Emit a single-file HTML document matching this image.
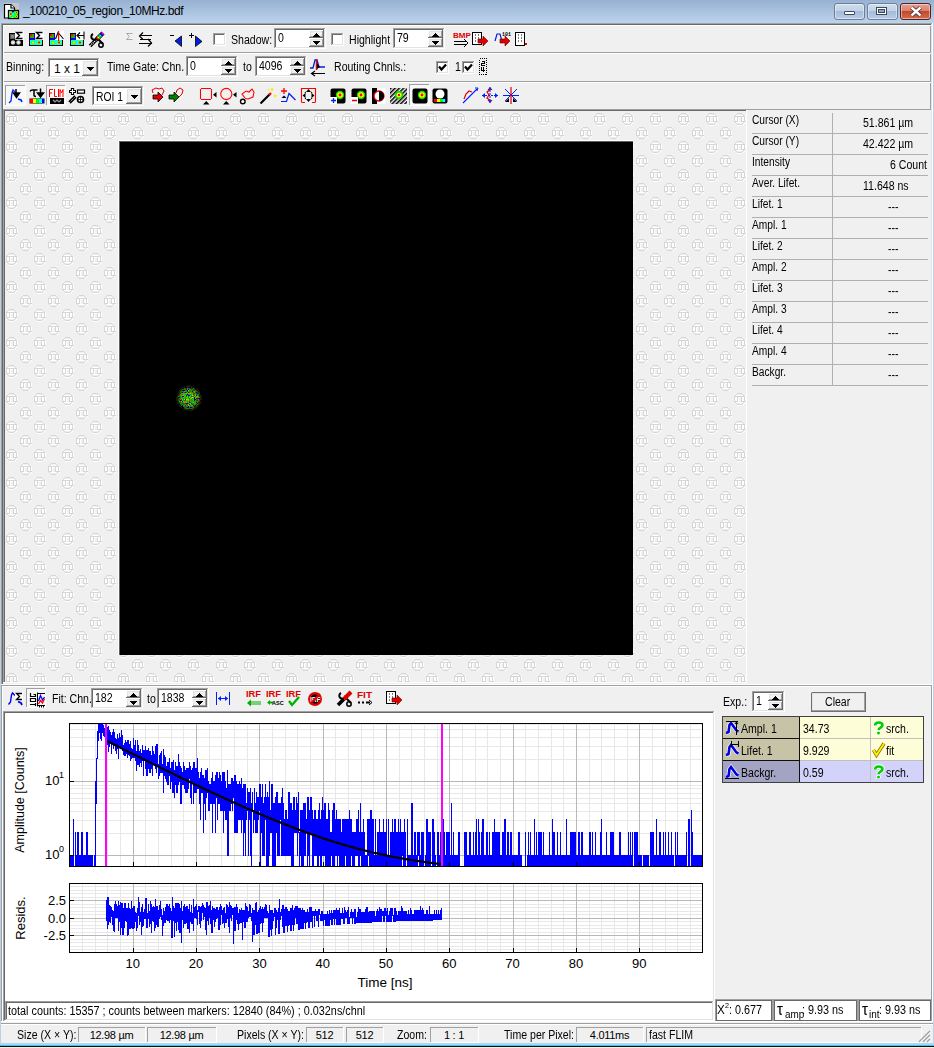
<!DOCTYPE html>
<html><head><meta charset="utf-8"><style>
html,body{margin:0;padding:0;}
body{width:934px;height:1048px;overflow:hidden;position:relative;background:#f0f0f0;font-family:"Liberation Sans",sans-serif;}
.t{position:absolute;white-space:pre;line-height:1;}
.r{position:absolute;}
svg.r{overflow:visible;}
</style></head><body>
<div class="r" style="left:0px;top:0px;width:934px;height:23px;background:linear-gradient(#97b1d2,#bcd3ec);"></div>
<div class="r" style="left:0px;top:23px;width:1px;height:1025px;background:#b9d1ea;"></div>
<div class="r" style="left:933px;top:23px;width:1px;height:1025px;background:#b9d1ea;"></div>
<div class="r" style="left:932px;top:23px;width:1px;height:1000px;background:#fff;"></div>
<div class="r" style="left:1px;top:23px;width:1px;height:662px;background:#a0a0a0;"></div>
<div class="r" style="left:2px;top:24px;width:1px;height:660px;background:#696969;"></div>
<div class="r" style="left:1px;top:23px;width:931px;height:1px;background:#a0a0a0;"></div>
<div class="r" style="left:2px;top:24px;width:929px;height:1px;background:#696969;"></div>
<div class="r" style="left:931px;top:24px;width:1px;height:660px;background:#e3e3e3;"></div>
<div class="r" style="left:1px;top:684px;width:932px;height:1px;background:#fff;"></div>
<div class="r" style="left:930px;top:25px;width:1px;height:84px;background:#a0a0a0;"></div>
<div class="r" style="left:1px;top:685px;width:931px;height:1px;background:#a0a0a0;"></div>
<div class="r" style="left:1px;top:685px;width:1px;height:337px;background:#a0a0a0;"></div>
<div class="r" style="left:2px;top:686px;width:929px;height:1px;background:#fff;"></div>
<div class="r" style="left:2px;top:686px;width:1px;height:335px;background:#fff;"></div>
<div class="r" style="left:931px;top:685px;width:1px;height:337px;background:#a0a0a0;"></div>
<div class="r" style="left:0px;top:1043px;width:934px;height:2px;background:#b9d1ea;"></div>
<div class="r" style="left:0px;top:1045px;width:934px;height:1px;background:#2ad0f0;"></div>
<div class="r" style="left:0px;top:1046px;width:934px;height:1px;background:#101010;"></div>
<div class="r" style="left:0px;top:1047px;width:934px;height:1px;background:#f0f0f0;"></div>
<svg class="r" style="left:2px;top:2px;" width="20" height="20" viewBox="0 0 20 20">
<rect x="1.5" y="1" width="15.5" height="15.5" fill="#c6c6c6"/>
<rect x="1" y="8" width="3" height="9" fill="#c6c6c6"/>
<path d="M2.5 2.5 H9 L12.5 6 V16 H2.5 Z" fill="#fff" stroke="#000" stroke-width="1.2"/>
<path d="M9 2.5 V6 H12.5" fill="#fff" stroke="#000" stroke-width="1.2"/>
<rect x="6.5" y="8.5" width="10" height="8" fill="#00ff00" stroke="#000" stroke-width="1.3"/>
<rect x="7.2" y="9.2" width="2" height="2" fill="#00ffff"/><rect x="10" y="9" width="2" height="1.5" fill="#0000d0"/>
<rect x="10.5" y="10.5" width="2" height="4" fill="#00ffff"/><rect x="7.2" y="13.5" width="1.5" height="2" fill="#00ffff"/>
<circle cx="8.8" cy="12" r="1.6" fill="#ffff00"/><circle cx="8.8" cy="12" r="1" fill="#ff0000"/>
<circle cx="14.5" cy="10.5" r="1.2" fill="#ffff00"/><circle cx="14.5" cy="10.5" r="0.7" fill="#ff0000"/>
<circle cx="14.5" cy="14.4" r="1.2" fill="#ffff00"/><circle cx="14.5" cy="14.4" r="0.7" fill="#ff0000"/>
<rect x="9.5" y="15" width="2" height="1" fill="#ffff00"/>
</svg>
<div class="t" style="left:23px;top:4.84px;font-size:12px;color:#000;letter-spacing:-0.42px;">_100210_05_region_10MHz.bdf</div>
<div class="r" style="left:834px;top:3px;width:29px;height:15px;border:1px solid #6d7f96;border-radius:3px;background:linear-gradient(#cfdcec 0%,#c0d2e8 45%,#a4bcd9 50%,#b8cde6 100%);box-shadow:inset 0 0 0 1px rgba(255,255,255,0.45)"></div>
<div class="r" style="left:867px;top:3px;width:29px;height:15px;border:1px solid #6d7f96;border-radius:3px;background:linear-gradient(#cfdcec 0%,#c0d2e8 45%,#a4bcd9 50%,#b8cde6 100%);box-shadow:inset 0 0 0 1px rgba(255,255,255,0.45)"></div>
<div class="r" style="left:900px;top:3px;width:29px;height:15px;border:1px solid #5a1d1d;border-radius:3px;background:linear-gradient(#e8a091 0%,#d9826d 45%,#c04a2a 50%,#cf6f4f 100%);box-shadow:inset 0 0 0 1px rgba(255,255,255,0.45)"></div>
<div class="r" style="left:844px;top:11px;width:11px;height:4px;background:#fff;border:1px solid #3c4a5c;border-radius:1px;box-sizing:border-box"></div>
<div class="r" style="left:876px;top:7px;width:11px;height:8px;border:1px solid #3c4a5c;background:#fff;box-sizing:border-box"></div>
<div class="r" style="left:878px;top:9px;width:7px;height:4px;background:#8aa6c8;border:1px solid #3c4a5c;box-sizing:border-box"></div>
<svg class="r" style="left:908px;top:6px;" width="16" height="11" viewBox="0 0 16 11"><path d="M3.5 1.5 L12.5 9.5 M12.5 1.5 L3.5 9.5" stroke="#4a2020" stroke-width="4"/><path d="M3.5 1.5 L12.5 9.5 M12.5 1.5 L3.5 9.5" stroke="#fff" stroke-width="2.4"/></svg>
<div class="r" style="left:3px;top:25px;width:928px;height:1px;background:#fff;"></div>
<div class="r" style="left:3px;top:25px;width:1px;height:1px;background:#fff;"></div>
<div class="r" style="left:3px;top:52px;width:928px;height:1px;background:#a0a0a0;"></div>
<div class="r" style="left:3px;top:53px;width:928px;height:1px;background:#fff;"></div>
<div class="r" style="left:3px;top:81px;width:928px;height:1px;background:#a0a0a0;"></div>
<div class="r" style="left:3px;top:82px;width:928px;height:1px;background:#fff;"></div>
<div class="r" style="left:3px;top:25px;width:1px;height:84px;background:#fff;"></div>
<svg class="r" style="left:8px;top:31px;" width="16" height="16" viewBox="0 0 16 16"><rect x="1" y="2" width="14" height="13" fill="#000"/><rect x="2" y="3" width="5" height="5" fill="#555"/><rect x="3" y="4" width="3" height="3" fill="#888"/><circle cx="5" cy="11.5" r="2.2" fill="#ccc"/><circle cx="5" cy="11.5" r="1" fill="#fff"/><circle cx="10.5" cy="11.5" r="2.2" fill="#ccc"/><circle cx="10.5" cy="11.5" r="1" fill="#fff"/><rect x="7" y="0" width="9" height="9" fill="#fff"/><path d="M14.5 1.5 H8.5 L11.5 4.5 L8.5 7.5 H14.5" stroke="#000" fill="none" stroke-width="1.4"/></svg>
<svg class="r" style="left:28px;top:31px;" width="16" height="16" viewBox="0 0 16 16"><rect x="1" y="2" width="14" height="13" fill="#000"/><rect x="2" y="3" width="12" height="11" fill="#0000ff"/><rect x="2" y="3" width="4" height="4" fill="#40a000"/><rect x="2" y="3" width="2" height="2" fill="#d02000"/><rect x="2" y="9" width="12" height="5" fill="#00ffff"/><circle cx="5" cy="11.5" r="2" fill="#40ff00"/><circle cx="5" cy="11.5" r="0.9" fill="#ffff00"/><circle cx="11" cy="11.5" r="2" fill="#80ff00"/><circle cx="11" cy="11.5" r="1.1" fill="#ff0000"/><rect x="7" y="0" width="9" height="9" fill="#fff"/><path d="M14.5 1.5 H8.5 L11.5 4.5 L8.5 7.5 H14.5" stroke="#000" fill="none" stroke-width="1.4"/></svg>
<svg class="r" style="left:48px;top:31px;" width="16" height="16" viewBox="0 0 16 16"><rect x="1" y="2" width="14" height="13" fill="#000"/><rect x="2" y="3" width="12" height="11" fill="#0000ff"/><rect x="2" y="3" width="4" height="4" fill="#40a000"/><rect x="2" y="3" width="2" height="2" fill="#d02000"/><rect x="2" y="9" width="12" height="5" fill="#00ffff"/><circle cx="5" cy="11.5" r="2" fill="#40ff00"/><circle cx="5" cy="11.5" r="0.9" fill="#ffff00"/><circle cx="11" cy="11.5" r="2" fill="#80ff00"/><circle cx="11" cy="11.5" r="1.1" fill="#ff0000"/><rect x="7" y="0" width="9" height="9" fill="#fff"/><path d="M7.5 8 L10 1.5 L15.5 8" stroke="#000" fill="none" stroke-width="1.1"/><rect x="10" y="0" width="1.2" height="10" fill="#ff0000"/></svg>
<svg class="r" style="left:69px;top:31px;" width="16" height="16" viewBox="0 0 16 16"><rect x="1" y="2" width="14" height="13" fill="#000"/><rect x="2" y="3" width="12" height="11" fill="#0000ff"/><rect x="2" y="3" width="4" height="4" fill="#40a000"/><rect x="2" y="3" width="2" height="2" fill="#d02000"/><rect x="2" y="9" width="12" height="5" fill="#00ffff"/><circle cx="5" cy="11.5" r="2" fill="#40ff00"/><circle cx="5" cy="11.5" r="0.9" fill="#ffff00"/><circle cx="11" cy="11.5" r="2" fill="#80ff00"/><circle cx="11" cy="11.5" r="1.1" fill="#ff0000"/><rect x="7" y="0" width="9" height="9" fill="#fff"/><path d="M15 4.5 H8 M11 1.5 L8 4.5 L11 7.5 M15 0.5 V8.5" stroke="#000" fill="none" stroke-width="1.1"/></svg>
<svg class="r" style="left:88px;top:31px;" width="17" height="17" viewBox="0 0 17 17">
<path d="M2 15 L8 9" stroke="#000" stroke-width="3.5"/><path d="M2 15 L8 9" stroke="#fff" stroke-width="1.5" stroke-dasharray="1 1"/>
<path d="M5 3 A3 3 0 1 0 9 7 L15 13" stroke="#000" stroke-width="2" fill="none"/>
<path d="M8 9 L15 2" stroke="#000" stroke-width="4.5"/>
<path d="M9 8 L10 7" stroke="#f00" stroke-width="3"/><path d="M10 7 L11 6" stroke="#ff0" stroke-width="3"/><path d="M11 6 L12 5" stroke="#0f0" stroke-width="3"/><path d="M12 5 L13 4" stroke="#0ff" stroke-width="3"/><path d="M13 4 L14 3" stroke="#00f" stroke-width="3"/><path d="M14 3 L15 2" stroke="#f0f" stroke-width="3"/>
<circle cx="13" cy="14" r="2.2" stroke="#000" stroke-width="1.5" fill="none"/>
</svg>
<svg class="r" style="left:125px;top:32px;" width="9" height="9" viewBox="0 0 9 9"><path d="M7.5 1.5 H1.5 L4.5 4.5 L1.5 7.5 H7.5" stroke="#a8a8a8" fill="none"/></svg>
<svg class="r" style="left:137px;top:31px;" width="17" height="16" viewBox="0 0 17 16"><path d="M3 4.5 H15 M3 8.5 H14 M2 12.5 H15" stroke="#000" stroke-width="1.2"/><path d="M6 1.5 L2.5 5 L6 8.5 M11 8 L14.5 12 L11 15.5" stroke="#000" fill="none" stroke-width="1.2"/></svg>
<svg class="r" style="left:170px;top:33px;" width="14" height="14" viewBox="0 0 14 14"><path d="M0 2.5 H4" stroke="#000"/><path d="M11.5 3 V13.5 L5 8 Z" fill="#0020e0" stroke="#000" stroke-width="0.8"/></svg>
<svg class="r" style="left:189px;top:32px;" width="14" height="15" viewBox="0 0 14 15"><path d="M0 3.5 H5 M2.5 1 V6" stroke="#000"/><path d="M6.5 4 V14.5 L13 9.5 Z" fill="#0020e0" stroke="#000" stroke-width="0.8"/></svg>
<div class="r" style="left:213px;top:33px;width:13px;height:13px;background:#fff;"></div>
<div class="r" style="left:213px;top:33px;width:12px;height:1px;background:#a0a0a0;"></div>
<div class="r" style="left:213px;top:33px;width:1px;height:12px;background:#a0a0a0;"></div>
<div class="r" style="left:214px;top:34px;width:10px;height:1px;background:#696969;"></div>
<div class="r" style="left:214px;top:34px;width:1px;height:10px;background:#696969;"></div>
<div class="r" style="left:213px;top:45px;width:13px;height:1px;background:#fff;"></div>
<div class="r" style="left:225px;top:33px;width:1px;height:13px;background:#fff;"></div>
<div class="r" style="left:214px;top:44px;width:11px;height:1px;background:#e3e3e3;"></div>
<div class="r" style="left:224px;top:34px;width:1px;height:11px;background:#e3e3e3;"></div>
<div class="t" style="left:231px;top:33.84px;font-size:12px;color:#000;transform:scaleX(0.88);transform-origin:0 0">Shadow:</div>
<div class="r" style="left:274px;top:28px;width:52px;height:21px;background:#fff;"></div>
<div class="r" style="left:274px;top:28px;width:51px;height:1px;background:#a0a0a0;"></div>
<div class="r" style="left:274px;top:28px;width:1px;height:20px;background:#a0a0a0;"></div>
<div class="r" style="left:274px;top:48px;width:52px;height:1px;background:#fff;"></div>
<div class="r" style="left:325px;top:28px;width:1px;height:21px;background:#fff;"></div>
<div class="r" style="left:275px;top:29px;width:49px;height:1px;background:#696969;"></div>
<div class="r" style="left:275px;top:29px;width:1px;height:18px;background:#696969;"></div>
<div class="r" style="left:275px;top:47px;width:50px;height:1px;background:#e3e3e3;"></div>
<div class="r" style="left:324px;top:29px;width:1px;height:19px;background:#e3e3e3;"></div>
<div class="r" style="left:309px;top:30px;width:15px;height:8px;background:#f0f0f0;"></div>
<div class="r" style="left:309px;top:30px;width:14px;height:1px;background:#fff;"></div>
<div class="r" style="left:309px;top:30px;width:1px;height:7px;background:#fff;"></div>
<div class="r" style="left:309px;top:37px;width:15px;height:1px;background:#696969;"></div>
<div class="r" style="left:323px;top:30px;width:1px;height:8px;background:#696969;"></div>
<div class="r" style="left:310px;top:31px;width:12px;height:1px;background:#e3e3e3;"></div>
<div class="r" style="left:310px;top:31px;width:1px;height:5px;background:#e3e3e3;"></div>
<div class="r" style="left:310px;top:36px;width:13px;height:1px;background:#a0a0a0;"></div>
<div class="r" style="left:322px;top:31px;width:1px;height:6px;background:#a0a0a0;"></div>
<div class="r" style="left:309px;top:38px;width:15px;height:9px;background:#f0f0f0;"></div>
<div class="r" style="left:309px;top:38px;width:14px;height:1px;background:#fff;"></div>
<div class="r" style="left:309px;top:38px;width:1px;height:8px;background:#fff;"></div>
<div class="r" style="left:309px;top:46px;width:15px;height:1px;background:#696969;"></div>
<div class="r" style="left:323px;top:38px;width:1px;height:9px;background:#696969;"></div>
<div class="r" style="left:310px;top:39px;width:12px;height:1px;background:#e3e3e3;"></div>
<div class="r" style="left:310px;top:39px;width:1px;height:6px;background:#e3e3e3;"></div>
<div class="r" style="left:310px;top:45px;width:13px;height:1px;background:#a0a0a0;"></div>
<div class="r" style="left:322px;top:39px;width:1px;height:7px;background:#a0a0a0;"></div>
<div class="r" style="left:316px;top:33px;width:1px;height:1px;background:#000;"></div>
<div class="r" style="left:315px;top:34px;width:3px;height:1px;background:#000;"></div>
<div class="r" style="left:314px;top:35px;width:5px;height:1px;background:#000;"></div>
<div class="r" style="left:313px;top:36px;width:7px;height:1px;background:#000;"></div>
<div class="r" style="left:313px;top:41px;width:7px;height:1px;background:#000;"></div>
<div class="r" style="left:314px;top:42px;width:5px;height:1px;background:#000;"></div>
<div class="r" style="left:315px;top:43px;width:3px;height:1px;background:#000;"></div>
<div class="r" style="left:316px;top:44px;width:1px;height:1px;background:#000;"></div>
<div class="t" style="left:278px;top:31.84px;font-size:12px;color:#000;transform:scaleX(0.88);transform-origin:0 0">0</div>
<div class="r" style="left:331px;top:33px;width:13px;height:13px;background:#fff;"></div>
<div class="r" style="left:331px;top:33px;width:12px;height:1px;background:#a0a0a0;"></div>
<div class="r" style="left:331px;top:33px;width:1px;height:12px;background:#a0a0a0;"></div>
<div class="r" style="left:332px;top:34px;width:10px;height:1px;background:#696969;"></div>
<div class="r" style="left:332px;top:34px;width:1px;height:10px;background:#696969;"></div>
<div class="r" style="left:331px;top:45px;width:13px;height:1px;background:#fff;"></div>
<div class="r" style="left:343px;top:33px;width:1px;height:13px;background:#fff;"></div>
<div class="r" style="left:332px;top:44px;width:11px;height:1px;background:#e3e3e3;"></div>
<div class="r" style="left:342px;top:34px;width:1px;height:11px;background:#e3e3e3;"></div>
<div class="t" style="left:349px;top:33.84px;font-size:12px;color:#000;transform:scaleX(0.88);transform-origin:0 0">Highlight</div>
<div class="r" style="left:393px;top:28px;width:52px;height:21px;background:#fff;"></div>
<div class="r" style="left:393px;top:28px;width:51px;height:1px;background:#a0a0a0;"></div>
<div class="r" style="left:393px;top:28px;width:1px;height:20px;background:#a0a0a0;"></div>
<div class="r" style="left:393px;top:48px;width:52px;height:1px;background:#fff;"></div>
<div class="r" style="left:444px;top:28px;width:1px;height:21px;background:#fff;"></div>
<div class="r" style="left:394px;top:29px;width:49px;height:1px;background:#696969;"></div>
<div class="r" style="left:394px;top:29px;width:1px;height:18px;background:#696969;"></div>
<div class="r" style="left:394px;top:47px;width:50px;height:1px;background:#e3e3e3;"></div>
<div class="r" style="left:443px;top:29px;width:1px;height:19px;background:#e3e3e3;"></div>
<div class="r" style="left:428px;top:30px;width:15px;height:8px;background:#f0f0f0;"></div>
<div class="r" style="left:428px;top:30px;width:14px;height:1px;background:#fff;"></div>
<div class="r" style="left:428px;top:30px;width:1px;height:7px;background:#fff;"></div>
<div class="r" style="left:428px;top:37px;width:15px;height:1px;background:#696969;"></div>
<div class="r" style="left:442px;top:30px;width:1px;height:8px;background:#696969;"></div>
<div class="r" style="left:429px;top:31px;width:12px;height:1px;background:#e3e3e3;"></div>
<div class="r" style="left:429px;top:31px;width:1px;height:5px;background:#e3e3e3;"></div>
<div class="r" style="left:429px;top:36px;width:13px;height:1px;background:#a0a0a0;"></div>
<div class="r" style="left:441px;top:31px;width:1px;height:6px;background:#a0a0a0;"></div>
<div class="r" style="left:428px;top:38px;width:15px;height:9px;background:#f0f0f0;"></div>
<div class="r" style="left:428px;top:38px;width:14px;height:1px;background:#fff;"></div>
<div class="r" style="left:428px;top:38px;width:1px;height:8px;background:#fff;"></div>
<div class="r" style="left:428px;top:46px;width:15px;height:1px;background:#696969;"></div>
<div class="r" style="left:442px;top:38px;width:1px;height:9px;background:#696969;"></div>
<div class="r" style="left:429px;top:39px;width:12px;height:1px;background:#e3e3e3;"></div>
<div class="r" style="left:429px;top:39px;width:1px;height:6px;background:#e3e3e3;"></div>
<div class="r" style="left:429px;top:45px;width:13px;height:1px;background:#a0a0a0;"></div>
<div class="r" style="left:441px;top:39px;width:1px;height:7px;background:#a0a0a0;"></div>
<div class="r" style="left:435px;top:33px;width:1px;height:1px;background:#000;"></div>
<div class="r" style="left:434px;top:34px;width:3px;height:1px;background:#000;"></div>
<div class="r" style="left:433px;top:35px;width:5px;height:1px;background:#000;"></div>
<div class="r" style="left:432px;top:36px;width:7px;height:1px;background:#000;"></div>
<div class="r" style="left:432px;top:41px;width:7px;height:1px;background:#000;"></div>
<div class="r" style="left:433px;top:42px;width:5px;height:1px;background:#000;"></div>
<div class="r" style="left:434px;top:43px;width:3px;height:1px;background:#000;"></div>
<div class="r" style="left:435px;top:44px;width:1px;height:1px;background:#000;"></div>
<div class="t" style="left:397px;top:31.84px;font-size:12px;color:#000;transform:scaleX(0.88);transform-origin:0 0">79</div>
<svg class="r" style="left:453px;top:31px;" width="17" height="16" viewBox="0 0 17 16"><text x="0" y="7" font-family="Liberation Sans" font-size="8" font-weight="bold" fill="#e00000">BMP</text><path d="M1 10.5 H14 M1 13.5 H14 M11 8 L15 12 L11 16" stroke="#000" fill="none"/></svg>
<svg class="r" style="left:472px;top:31px;" width="17" height="16" viewBox="0 0 17 16"><rect x="0.5" y="1.5" width="9" height="12" fill="#fff" stroke="#000"/><path d="M3 4 H4 M3 7 H4 M3 10 H4 M6 4 H7 M6 7 H7" stroke="#000"/><path d="M6 8 H11 V5 L16 10 L11 15 V12 H6 Z" fill="#e00000" stroke="#600" stroke-width="0.6"/></svg>
<svg class="r" style="left:494px;top:31px;" width="17" height="16" viewBox="0 0 17 16"><path d="M1 10 L3 3 H6 L8 10" stroke="#0020e0" fill="none" stroke-width="1.2"/><text x="8" y="5" font-family="Liberation Mono" font-size="5" font-weight="bold">101</text><path d="M6 8 H11 V5 L16 10 L11 15 V12 H6 Z" fill="#e00000" stroke="#600" stroke-width="0.6"/></svg>
<svg class="r" style="left:515px;top:31px;" width="15" height="16" viewBox="0 0 15 16"><rect x="0.5" y="1.5" width="9" height="13" fill="#fff" stroke="#000"/><path d="M3 4 H4 M6 4 H7 M3 7 H4 M6 7 H7 M3 10 H4 M6 10 H7" stroke="#000"/><rect x="10" y="12" width="2" height="2" fill="#e00000"/></svg>
<div class="t" style="left:6px;top:60.84px;font-size:12px;color:#000;transform:scaleX(0.88);transform-origin:0 0">Binning:</div>
<div class="r" style="left:48px;top:58px;width:52px;height:20px;background:#fff;"></div>
<div class="r" style="left:48px;top:58px;width:51px;height:1px;background:#a0a0a0;"></div>
<div class="r" style="left:48px;top:58px;width:1px;height:19px;background:#a0a0a0;"></div>
<div class="r" style="left:48px;top:77px;width:52px;height:1px;background:#fff;"></div>
<div class="r" style="left:99px;top:58px;width:1px;height:20px;background:#fff;"></div>
<div class="r" style="left:49px;top:59px;width:49px;height:1px;background:#696969;"></div>
<div class="r" style="left:49px;top:59px;width:1px;height:17px;background:#696969;"></div>
<div class="r" style="left:49px;top:76px;width:50px;height:1px;background:#e3e3e3;"></div>
<div class="r" style="left:98px;top:59px;width:1px;height:18px;background:#e3e3e3;"></div>
<div class="r" style="left:82px;top:60px;width:16px;height:16px;background:#f0f0f0;"></div>
<div class="r" style="left:82px;top:60px;width:15px;height:1px;background:#fff;"></div>
<div class="r" style="left:82px;top:60px;width:1px;height:15px;background:#fff;"></div>
<div class="r" style="left:82px;top:75px;width:16px;height:1px;background:#696969;"></div>
<div class="r" style="left:97px;top:60px;width:1px;height:16px;background:#696969;"></div>
<div class="r" style="left:83px;top:61px;width:13px;height:1px;background:#e3e3e3;"></div>
<div class="r" style="left:83px;top:61px;width:1px;height:13px;background:#e3e3e3;"></div>
<div class="r" style="left:83px;top:74px;width:14px;height:1px;background:#a0a0a0;"></div>
<div class="r" style="left:96px;top:61px;width:1px;height:14px;background:#a0a0a0;"></div>
<div class="r" style="left:87px;top:67px;width:7px;height:1px;background:#000;"></div>
<div class="r" style="left:88px;top:68px;width:5px;height:1px;background:#000;"></div>
<div class="r" style="left:89px;top:69px;width:3px;height:1px;background:#000;"></div>
<div class="r" style="left:90px;top:70px;width:1px;height:1px;background:#000;"></div>
<div class="t" style="left:54px;top:62.84px;font-size:12px;color:#000;transform:scaleX(1.0);transform-origin:0 0">1 x 1</div>
<div class="t" style="left:107px;top:60.84px;font-size:12px;color:#000;transform:scaleX(0.88);transform-origin:0 0">Time Gate: Chn.</div>
<div class="r" style="left:186px;top:56px;width:52px;height:21px;background:#fff;"></div>
<div class="r" style="left:186px;top:56px;width:51px;height:1px;background:#a0a0a0;"></div>
<div class="r" style="left:186px;top:56px;width:1px;height:20px;background:#a0a0a0;"></div>
<div class="r" style="left:186px;top:76px;width:52px;height:1px;background:#fff;"></div>
<div class="r" style="left:237px;top:56px;width:1px;height:21px;background:#fff;"></div>
<div class="r" style="left:187px;top:57px;width:49px;height:1px;background:#696969;"></div>
<div class="r" style="left:187px;top:57px;width:1px;height:18px;background:#696969;"></div>
<div class="r" style="left:187px;top:75px;width:50px;height:1px;background:#e3e3e3;"></div>
<div class="r" style="left:236px;top:57px;width:1px;height:19px;background:#e3e3e3;"></div>
<div class="r" style="left:221px;top:58px;width:15px;height:8px;background:#f0f0f0;"></div>
<div class="r" style="left:221px;top:58px;width:14px;height:1px;background:#fff;"></div>
<div class="r" style="left:221px;top:58px;width:1px;height:7px;background:#fff;"></div>
<div class="r" style="left:221px;top:65px;width:15px;height:1px;background:#696969;"></div>
<div class="r" style="left:235px;top:58px;width:1px;height:8px;background:#696969;"></div>
<div class="r" style="left:222px;top:59px;width:12px;height:1px;background:#e3e3e3;"></div>
<div class="r" style="left:222px;top:59px;width:1px;height:5px;background:#e3e3e3;"></div>
<div class="r" style="left:222px;top:64px;width:13px;height:1px;background:#a0a0a0;"></div>
<div class="r" style="left:234px;top:59px;width:1px;height:6px;background:#a0a0a0;"></div>
<div class="r" style="left:221px;top:66px;width:15px;height:9px;background:#f0f0f0;"></div>
<div class="r" style="left:221px;top:66px;width:14px;height:1px;background:#fff;"></div>
<div class="r" style="left:221px;top:66px;width:1px;height:8px;background:#fff;"></div>
<div class="r" style="left:221px;top:74px;width:15px;height:1px;background:#696969;"></div>
<div class="r" style="left:235px;top:66px;width:1px;height:9px;background:#696969;"></div>
<div class="r" style="left:222px;top:67px;width:12px;height:1px;background:#e3e3e3;"></div>
<div class="r" style="left:222px;top:67px;width:1px;height:6px;background:#e3e3e3;"></div>
<div class="r" style="left:222px;top:73px;width:13px;height:1px;background:#a0a0a0;"></div>
<div class="r" style="left:234px;top:67px;width:1px;height:7px;background:#a0a0a0;"></div>
<div class="r" style="left:228px;top:61px;width:1px;height:1px;background:#000;"></div>
<div class="r" style="left:227px;top:62px;width:3px;height:1px;background:#000;"></div>
<div class="r" style="left:226px;top:63px;width:5px;height:1px;background:#000;"></div>
<div class="r" style="left:225px;top:64px;width:7px;height:1px;background:#000;"></div>
<div class="r" style="left:225px;top:69px;width:7px;height:1px;background:#000;"></div>
<div class="r" style="left:226px;top:70px;width:5px;height:1px;background:#000;"></div>
<div class="r" style="left:227px;top:71px;width:3px;height:1px;background:#000;"></div>
<div class="r" style="left:228px;top:72px;width:1px;height:1px;background:#000;"></div>
<div class="t" style="left:190px;top:59.84px;font-size:12px;color:#000;transform:scaleX(0.88);transform-origin:0 0">0</div>
<div class="t" style="left:243px;top:60.84px;font-size:12px;color:#000;transform:scaleX(0.88);transform-origin:0 0">to</div>
<div class="r" style="left:255px;top:56px;width:52px;height:21px;background:#fff;"></div>
<div class="r" style="left:255px;top:56px;width:51px;height:1px;background:#a0a0a0;"></div>
<div class="r" style="left:255px;top:56px;width:1px;height:20px;background:#a0a0a0;"></div>
<div class="r" style="left:255px;top:76px;width:52px;height:1px;background:#fff;"></div>
<div class="r" style="left:306px;top:56px;width:1px;height:21px;background:#fff;"></div>
<div class="r" style="left:256px;top:57px;width:49px;height:1px;background:#696969;"></div>
<div class="r" style="left:256px;top:57px;width:1px;height:18px;background:#696969;"></div>
<div class="r" style="left:256px;top:75px;width:50px;height:1px;background:#e3e3e3;"></div>
<div class="r" style="left:305px;top:57px;width:1px;height:19px;background:#e3e3e3;"></div>
<div class="r" style="left:290px;top:58px;width:15px;height:8px;background:#f0f0f0;"></div>
<div class="r" style="left:290px;top:58px;width:14px;height:1px;background:#fff;"></div>
<div class="r" style="left:290px;top:58px;width:1px;height:7px;background:#fff;"></div>
<div class="r" style="left:290px;top:65px;width:15px;height:1px;background:#696969;"></div>
<div class="r" style="left:304px;top:58px;width:1px;height:8px;background:#696969;"></div>
<div class="r" style="left:291px;top:59px;width:12px;height:1px;background:#e3e3e3;"></div>
<div class="r" style="left:291px;top:59px;width:1px;height:5px;background:#e3e3e3;"></div>
<div class="r" style="left:291px;top:64px;width:13px;height:1px;background:#a0a0a0;"></div>
<div class="r" style="left:303px;top:59px;width:1px;height:6px;background:#a0a0a0;"></div>
<div class="r" style="left:290px;top:66px;width:15px;height:9px;background:#f0f0f0;"></div>
<div class="r" style="left:290px;top:66px;width:14px;height:1px;background:#fff;"></div>
<div class="r" style="left:290px;top:66px;width:1px;height:8px;background:#fff;"></div>
<div class="r" style="left:290px;top:74px;width:15px;height:1px;background:#696969;"></div>
<div class="r" style="left:304px;top:66px;width:1px;height:9px;background:#696969;"></div>
<div class="r" style="left:291px;top:67px;width:12px;height:1px;background:#e3e3e3;"></div>
<div class="r" style="left:291px;top:67px;width:1px;height:6px;background:#e3e3e3;"></div>
<div class="r" style="left:291px;top:73px;width:13px;height:1px;background:#a0a0a0;"></div>
<div class="r" style="left:303px;top:67px;width:1px;height:7px;background:#a0a0a0;"></div>
<div class="r" style="left:297px;top:61px;width:1px;height:1px;background:#000;"></div>
<div class="r" style="left:296px;top:62px;width:3px;height:1px;background:#000;"></div>
<div class="r" style="left:295px;top:63px;width:5px;height:1px;background:#000;"></div>
<div class="r" style="left:294px;top:64px;width:7px;height:1px;background:#000;"></div>
<div class="r" style="left:294px;top:69px;width:7px;height:1px;background:#000;"></div>
<div class="r" style="left:295px;top:70px;width:5px;height:1px;background:#000;"></div>
<div class="r" style="left:296px;top:71px;width:3px;height:1px;background:#000;"></div>
<div class="r" style="left:297px;top:72px;width:1px;height:1px;background:#000;"></div>
<div class="t" style="left:259px;top:59.84px;font-size:12px;color:#000;transform:scaleX(0.88);transform-origin:0 0">4096</div>
<svg class="r" style="left:309px;top:58px;" width="18" height="18" viewBox="0 0 18 18"><path d="M1 10 H4 L6 2 H8 L10 9 H16" stroke="#0020e0" fill="none" stroke-width="1.3"/><path d="M7.5 1 V12" stroke="#e00000" stroke-width="1.5"/><path d="M8 5 L11 9 L8 11 Z" fill="#000"/><path d="M16 15.5 H3 M6 13 L2.5 15.5 L6 18" stroke="#000" fill="none" stroke-width="1.2"/></svg>
<div class="t" style="left:334px;top:60.84px;font-size:12px;color:#000;transform:scaleX(0.88);transform-origin:0 0">Routing Chnls.:</div>
<div class="r" style="left:436px;top:61px;width:13px;height:13px;background:#fff;"></div>
<div class="r" style="left:436px;top:61px;width:12px;height:1px;background:#a0a0a0;"></div>
<div class="r" style="left:436px;top:61px;width:1px;height:12px;background:#a0a0a0;"></div>
<div class="r" style="left:437px;top:62px;width:10px;height:1px;background:#696969;"></div>
<div class="r" style="left:437px;top:62px;width:1px;height:10px;background:#696969;"></div>
<div class="r" style="left:436px;top:73px;width:13px;height:1px;background:#fff;"></div>
<div class="r" style="left:448px;top:61px;width:1px;height:13px;background:#fff;"></div>
<div class="r" style="left:437px;top:72px;width:11px;height:1px;background:#e3e3e3;"></div>
<div class="r" style="left:447px;top:62px;width:1px;height:11px;background:#e3e3e3;"></div>
<svg class="r" style="left:436px;top:61px" width="13" height="13"><path d="M3 5.5 L5.5 8.5 L10 3.5" stroke="#000" stroke-width="2.2" fill="none"/></svg>
<div class="t" style="left:455px;top:60.84px;font-size:12px;color:#000;transform:scaleX(0.88);transform-origin:0 0">1</div>
<div class="r" style="left:462px;top:61px;width:13px;height:13px;background:#fff;"></div>
<div class="r" style="left:462px;top:61px;width:12px;height:1px;background:#a0a0a0;"></div>
<div class="r" style="left:462px;top:61px;width:1px;height:12px;background:#a0a0a0;"></div>
<div class="r" style="left:463px;top:62px;width:10px;height:1px;background:#696969;"></div>
<div class="r" style="left:463px;top:62px;width:1px;height:10px;background:#696969;"></div>
<div class="r" style="left:462px;top:73px;width:13px;height:1px;background:#fff;"></div>
<div class="r" style="left:474px;top:61px;width:1px;height:13px;background:#fff;"></div>
<div class="r" style="left:463px;top:72px;width:11px;height:1px;background:#e3e3e3;"></div>
<div class="r" style="left:473px;top:62px;width:1px;height:11px;background:#e3e3e3;"></div>
<svg class="r" style="left:462px;top:61px" width="13" height="13"><path d="M3 5.5 L5.5 8.5 L10 3.5" stroke="#000" stroke-width="2.2" fill="none"/></svg>
<svg class="r" style="left:479px;top:58px;" width="9" height="18" viewBox="0 0 9 18"><rect x="0.5" y="0.5" width="7" height="16" fill="none" stroke="#000" stroke-dasharray="1 1" shape-rendering="crispEdges"/><path d="M2.5 3 H5.5 V5 H2.5 V7 H5.5 M2.5 9 V12 H5.5 M4.5 9 V14" stroke="#000" fill="none" shape-rendering="crispEdges"/></svg>
<div class="r" style="left:5px;top:85px;width:21px;height:21px;background:#f8f8f8;"></div>
<div class="r" style="left:5px;top:85px;width:21px;height:1px;background:#a0a0a0;"></div>
<div class="r" style="left:5px;top:85px;width:1px;height:21px;background:#a0a0a0;"></div>
<div class="r" style="left:5px;top:105px;width:21px;height:1px;background:#fff;"></div>
<div class="r" style="left:25px;top:85px;width:1px;height:21px;background:#fff;"></div>
<svg class="r" style="left:8px;top:88px;" width="16" height="16" viewBox="0 0 16 16"><path d="M1 15 L3 13 L4 5 L5 2 L7 4" stroke="#0020ff" fill="none" stroke-width="1.3"/><path d="M8 1 V6 M5.5 5 H11.5 L8.5 9.5 Z" stroke="#000" fill="#000" stroke-width="1.5"/><path d="M10 11 L13 12 L14 14" stroke="#0020ff" stroke-width="1.6" fill="none"/></svg>
<svg class="r" style="left:29px;top:88px;" width="16" height="16" viewBox="0 0 16 16"><path d="M1 3.5 Q2 1.5 4 2 H8.5 M5 2 V7 Q5 8.5 7 8.5" stroke="#000" fill="none" stroke-width="1.5"/><path d="M11.5 0.5 V6 M8.5 5 H14.5 L11.5 9 Z" stroke="#000" fill="#000" stroke-width="1.5"/><rect x="0.5" y="10.5" width="15" height="5" fill="#000"/><rect x="1" y="11" width="3" height="4" fill="#f00"/><rect x="4" y="11" width="3" height="4" fill="#ff0"/><rect x="7" y="11" width="3" height="4" fill="#0f0"/><rect x="10" y="11" width="3" height="4" fill="#0ff"/><rect x="13" y="11" width="2" height="4" fill="#00f"/></svg>
<div class="r" style="left:46px;top:85px;width:20px;height:21px;background:#f8f8f8;"></div>
<div class="r" style="left:46px;top:85px;width:20px;height:1px;background:#a0a0a0;"></div>
<div class="r" style="left:46px;top:85px;width:1px;height:21px;background:#a0a0a0;"></div>
<div class="r" style="left:46px;top:105px;width:20px;height:1px;background:#fff;"></div>
<div class="r" style="left:65px;top:85px;width:1px;height:21px;background:#fff;"></div>
<svg class="r" style="left:48px;top:88px;" width="17" height="16" viewBox="0 0 17 16"><path d="M1.5 9 V1.5 H5 M1.5 5 H4 M6.5 1 V8.5 H9 M10.5 1 V9 M12 9 V1.5 L13.5 5 L15 1.5 V9" stroke="#ff0000" fill="none" stroke-width="1"/><rect x="2" y="10" width="14" height="6" fill="#000"/><path d="M5 12 L7 14 L9 12 L11 14 L13 12" stroke="#999" fill="none" stroke-width="1.2"/></svg>
<svg class="r" style="left:68px;top:87px;" width="17" height="17" viewBox="0 0 17 17"><path d="M4.5 1 V8 M1 4.5 H8" stroke="#000" stroke-width="3.2"/><path d="M4.5 2 V7 M2 4.5 H7" stroke="#fff" stroke-width="1.2"/><rect x="9.5" y="3" width="7" height="3.2" fill="#fff" stroke="#000" stroke-width="1.2"/><path d="M1.5 15.5 L7.5 9.5" stroke="#000" stroke-width="3.2"/><path d="M1.5 15.5 L7.5 9.5" stroke="#fff" stroke-width="1" stroke-dasharray="1 1"/><circle cx="12.5" cy="12.5" r="3" fill="#fff" stroke="#000" stroke-width="1.6"/><path d="M12.5 9 V16 M9 12.5 H16" stroke="#000" stroke-width="0.8"/></svg>
<div class="r" style="left:92px;top:86px;width:52px;height:20px;background:#fff;"></div>
<div class="r" style="left:92px;top:86px;width:51px;height:1px;background:#a0a0a0;"></div>
<div class="r" style="left:92px;top:86px;width:1px;height:19px;background:#a0a0a0;"></div>
<div class="r" style="left:92px;top:105px;width:52px;height:1px;background:#fff;"></div>
<div class="r" style="left:143px;top:86px;width:1px;height:20px;background:#fff;"></div>
<div class="r" style="left:93px;top:87px;width:49px;height:1px;background:#696969;"></div>
<div class="r" style="left:93px;top:87px;width:1px;height:17px;background:#696969;"></div>
<div class="r" style="left:93px;top:104px;width:50px;height:1px;background:#e3e3e3;"></div>
<div class="r" style="left:142px;top:87px;width:1px;height:18px;background:#e3e3e3;"></div>
<div class="r" style="left:126px;top:88px;width:16px;height:16px;background:#f0f0f0;"></div>
<div class="r" style="left:126px;top:88px;width:15px;height:1px;background:#fff;"></div>
<div class="r" style="left:126px;top:88px;width:1px;height:15px;background:#fff;"></div>
<div class="r" style="left:126px;top:103px;width:16px;height:1px;background:#696969;"></div>
<div class="r" style="left:141px;top:88px;width:1px;height:16px;background:#696969;"></div>
<div class="r" style="left:127px;top:89px;width:13px;height:1px;background:#e3e3e3;"></div>
<div class="r" style="left:127px;top:89px;width:1px;height:13px;background:#e3e3e3;"></div>
<div class="r" style="left:127px;top:102px;width:14px;height:1px;background:#a0a0a0;"></div>
<div class="r" style="left:140px;top:89px;width:1px;height:14px;background:#a0a0a0;"></div>
<div class="r" style="left:131px;top:95px;width:7px;height:1px;background:#000;"></div>
<div class="r" style="left:132px;top:96px;width:5px;height:1px;background:#000;"></div>
<div class="r" style="left:133px;top:97px;width:3px;height:1px;background:#000;"></div>
<div class="r" style="left:134px;top:98px;width:1px;height:1px;background:#000;"></div>
<div class="t" style="left:96px;top:90.84px;font-size:12px;color:#000;transform:scaleX(0.86);transform-origin:0 0">ROI 1</div>
<svg class="r" style="left:150px;top:87px;" width="17" height="17" viewBox="0 0 17 17"><path d="M3 6 L2 3 L6 1 L9 2 L12 1 L14 4 L12 8" stroke="#e00000" fill="none"/><path d="M3 8 H8 V5 L13 10 L8 15 V12 H3 Z" fill="#e00000" stroke="#000" stroke-width="0.8"/></svg>
<svg class="r" style="left:168px;top:87px;" width="17" height="17" viewBox="0 0 17 17"><path d="M8 6 L9 3 L12 1 L15 3 L14 7 L11 10" stroke="#e00000" fill="none"/><path d="M1 8 H6 V5 L11 10 L6 15 V12 H1 Z" fill="#008000" stroke="#000" stroke-width="0.8"/></svg>
<svg class="r" style="left:199px;top:87px;" width="19" height="18" viewBox="0 0 19 18"><path d="M2 1.5 H12 M1.5 2 V12 M12.5 2 V12 M2 12.5 H12" stroke="#ff0000" stroke-width="1.1"/><path d="M17.5 5 V10.5 L14 7.75 Z M7.25 14 L4 17.5 H10.5 Z" fill="#000"/></svg>
<svg class="r" style="left:219px;top:87px;" width="19" height="18" viewBox="0 0 19 18"><circle cx="7.3" cy="7" r="5.6" fill="none" stroke="#ff0000" stroke-width="1.1"/><path d="M17.5 5 V10.5 L14 7.75 Z M7.25 14 L4 17.5 H10.5 Z" fill="#000"/></svg>
<svg class="r" style="left:239px;top:87px;" width="16" height="18" viewBox="0 0 16 18"><path d="M6 11 L3 7 L7 4 L10 5 L13 2 L15 5 L14 10 L9 12 L6 11.5" stroke="#ff0000" fill="none" stroke-width="1.1"/><circle cx="3.8" cy="14.5" r="2.3" fill="#fff" stroke="#000" stroke-width="1.4"/></svg>
<svg class="r" style="left:259px;top:87px;" width="17" height="18" viewBox="0 0 17 18"><path d="M1.5 16.5 L11 7" stroke="#000" stroke-width="2.2"/><path d="M10 8 L12 6" stroke="#ff0000" stroke-width="2.2"/><path d="M12 1.5 L14 3.5 M14 1.5 L12 3.5 M15 8 L17 10 M17 8 L15 10 M9 2 L10 3" stroke="#ffee00" stroke-width="1.4"/></svg>
<svg class="r" style="left:280px;top:87px;" width="17" height="17" viewBox="0 0 17 17"><path d="M4 1 V7 M1 4 H7" stroke="#ff0000" stroke-width="1.3"/><path d="M4 8.5 L1.5 11 H6.5 Z" fill="#000"/><path d="M1 14.5 H6.5 L9 6.5 L15.5 13" stroke="#0020ff" fill="none" stroke-width="1.2"/></svg>
<svg class="r" style="left:300px;top:87px;" width="17" height="17" viewBox="0 0 17 17"><path d="M1.5 1 V15.5 M15.5 1 V15.5 M2 1.5 H15 M2 15.5 H15" stroke="#ff0000" stroke-width="1.1" stroke-dasharray="0"/><rect x="4" y="0" width="9" height="1" fill="#f0f0f0"/><rect x="4" y="15" width="9" height="2" fill="#f0f0f0"/><path d="M2 1.5 H5 M12 1.5 H15 M2 15.5 H5 M12 15.5 H15" stroke="#ff0000"/><path d="M8.5 2 L6 5 H11 Z M8.5 15 L6 12 H11 Z M2.5 8.5 L5.5 6 V11 Z M14.5 8.5 L11.5 6 V11 Z" fill="#000"/><path d="M6 5 Q4 6 5.5 6 M11 5 Q13 6 11.5 6 M6 12 Q4 11 5.5 11 M11 12 Q13 11 11.5 11" stroke="#000" fill="none"/></svg>
<svg class="r" style="left:330px;top:88px;" width="17" height="17" viewBox="0 0 17 17"><rect x="0.5" y="0.5" width="15" height="15" rx="2" fill="#000"/><circle cx="10" cy="7" r="4.2" fill="#00e000"/><circle cx="10" cy="7" r="2.8" fill="#ffff00"/><circle cx="10" cy="7" r="1.4" fill="#f00"/><rect x="0" y="9" width="7" height="7" fill="#fff"/><path d="M3.5 10 V15 M1 12.5 H6" stroke="#0020ff" stroke-width="1.3"/></svg>
<svg class="r" style="left:351px;top:88px;" width="17" height="17" viewBox="0 0 17 17"><rect x="0.5" y="0.5" width="15" height="15" rx="2" fill="#000"/><circle cx="10" cy="7" r="4.2" fill="#00e000"/><circle cx="10" cy="7" r="2.8" fill="#ffff00"/><circle cx="10" cy="7" r="1.4" fill="#f00"/><rect x="0" y="9" width="7" height="7" fill="#fff"/><path d="M1 12.5 H6" stroke="#e00000" stroke-width="1.5"/></svg>
<svg class="r" style="left:372px;top:88px;" width="15" height="16" viewBox="0 0 15 16"><rect x="0.5" y="0.5" width="13" height="15" fill="#fff"/><rect x="0" y="0" width="5" height="16" fill="#000"/><circle cx="7" cy="8" r="5" fill="#fff" stroke="#e00000" stroke-width="1.3"/><path d="M7 3 A5 5 0 0 1 7 13 Z" fill="#000"/></svg>
<svg class="r" style="left:390px;top:88px;" width="18" height="16" viewBox="0 0 18 16"><defs><pattern id="hatch" width="3" height="3" patternUnits="userSpaceOnUse" patternTransform="rotate(-45)"><rect width="3" height="1.5" fill="#000"/></pattern></defs><rect x="0" y="0" width="17" height="16" fill="url(#hatch)"/><circle cx="9" cy="7" r="4" fill="#00e000"/><circle cx="9" cy="7" r="2.5" fill="#ff0"/><circle cx="9" cy="7" r="1.2" fill="#f00"/></svg>
<div class="r" style="left:409px;top:84px;width:21px;height:22px;background:#f8f8f8;"></div>
<div class="r" style="left:409px;top:84px;width:21px;height:1px;background:#a0a0a0;"></div>
<div class="r" style="left:409px;top:84px;width:1px;height:22px;background:#a0a0a0;"></div>
<div class="r" style="left:409px;top:105px;width:21px;height:1px;background:#fff;"></div>
<div class="r" style="left:429px;top:84px;width:1px;height:22px;background:#fff;"></div>
<svg class="r" style="left:412px;top:88px;" width="17" height="17" viewBox="0 0 17 17"><rect x="0.5" y="0.5" width="15" height="15" rx="2" fill="#000"/><circle cx="10" cy="7" r="4.2" fill="#00e000"/><circle cx="10" cy="7" r="2.8" fill="#ffff00"/><circle cx="10" cy="7" r="1.4" fill="#f00"/></svg>
<svg class="r" style="left:432px;top:88px;" width="17" height="17" viewBox="0 0 17 17"><rect x="0.5" y="0.5" width="15" height="15" rx="2" fill="#000"/><circle cx="8" cy="6" r="4.5" fill="#fff"/><rect x="2" y="11" width="12" height="3" fill="#00f"/><rect x="2" y="11" width="3" height="3" fill="#f00"/><rect x="5" y="11" width="3" height="3" fill="#ff0"/><rect x="8" y="11" width="3" height="3" fill="#0f0"/><rect x="11" y="11" width="2" height="3" fill="#0ff"/></svg>
<svg class="r" style="left:462px;top:87px;" width="18" height="17" viewBox="0 0 18 17"><path d="M1 16 L15 2" stroke="#0020ff" stroke-width="1.1"/><path d="M2 12 L4 7 L7 4 L10 5" stroke="#e00000" fill="none" stroke-width="1.2"/><path d="M13 1 L16 1 L15 4" stroke="#0020ff" fill="none"/></svg>
<svg class="r" style="left:481px;top:87px;" width="18" height="17" viewBox="0 0 18 17"><path d="M1 8.5 H17 M9 0 V16" stroke="#0020ff" stroke-dasharray="2 1"/><path d="M1 8.5 L4 6 V11 Z M17 8.5 L14 6 V11 Z M9 0 L6.5 3 H11.5 Z M9 16 L6.5 13 H11.5 Z" fill="#0020ff"/><path d="M10 2 L6 5 L8 8 L6 11 L10 14" stroke="#e00000" fill="none" stroke-width="1.2"/></svg>
<svg class="r" style="left:502px;top:87px;" width="18" height="17" viewBox="0 0 18 17"><path d="M1 8.5 H17 M3 2 L15 14 M15 2 L3 14" stroke="#0020ff"/><path d="M9 0 V17" stroke="#e00000" stroke-width="1.2"/><path d="M3 15 L7 11 V15 Z M15 15 L11 11 V15 Z" fill="#000"/></svg>
<div class="r" style="left:3px;top:109px;width:928px;height:1px;background:#a0a0a0;"></div>
<div class="r" style="left:4px;top:110px;width:742px;height:1px;background:#696969;"></div>
<div class="r" style="left:3px;top:109px;width:1px;height:574px;background:#a0a0a0;"></div>
<div class="r" style="left:4px;top:110px;width:1px;height:572px;background:#696969;"></div>
<div class="r" style="left:746px;top:110px;width:1px;height:573px;background:#fff;"></div>
<div class="r" style="left:3px;top:682px;width:744px;height:1px;background:#fff;"></div>
<svg class="r" style="left:5px;top:111px" width="741" height="571"><defs>
<g id="mot"><path d="M3 3h7v1h-7zM2 5h2v4h-2zM5 5h3v1h-3zM5 6h1v4h-1zM9 5h2v4h-2zM12 5h1v4h-1zM3 10h7v1h-7zM12 10h1v1h-1zM11 11h1v1h-1zM10 12h1v1h-1zM4 13h5v1h-5z" fill="#fff"/><path d="M4 1h5v1h-5zM3 2h1v1h-1zM9 2h1v1h-1zM2 3h1v1h-1zM10 3h1v1h-1zM1 4h11v1h-11zM1 5h1v4h-1zM4 5h1v4h-1zM8 5h1v4h-1zM11 5h1v4h-1zM1 9h4v1h-4zM8 9h5v1h-5zM2 10h1v1h-1zM10 10h1v1h-1zM3 11h1v1h-1zM9 11h1v1h-1zM4 12h5v1h-5z" fill="#d6d6d6"/></g>
<pattern id="pat" width="28" height="28" patternUnits="userSpaceOnUse">
<use href="#mot" x="0" y="1"/><use href="#mot" x="14" y="15"/>
</pattern></defs>
<rect width="741" height="571" fill="#f0f0f0"/><rect width="741" height="571" fill="url(#pat)"/></svg>
<div class="r" style="left:118px;top:140px;width:515px;height:1px;background:#fff;"></div>
<div class="r" style="left:118px;top:140px;width:1px;height:515px;background:#fff;"></div>
<div class="r" style="left:119px;top:141px;width:514px;height:514px;background:#606060;"></div>
<div class="r" style="left:120px;top:142px;width:513px;height:513px;background:#000;"></div>
<svg class="r" style="left:176px;top:385px;filter:blur(0.5px)" width="26" height="26" viewBox="0 0 26 26"><rect x="11" y="0" width="1" height="1" fill="rgb(120, 241, 60)" opacity="0.13"/><rect x="12" y="0" width="1" height="1" fill="rgb(200, 193, 60)" opacity="0.14"/><rect x="13" y="0" width="1" height="1" fill="rgb(120, 182, 0)" opacity="0.12"/><rect x="14" y="0" width="1" height="1" fill="rgb(0, 251, 60)" opacity="0.15"/><rect x="8" y="1" width="1" height="1" fill="rgb(0, 248, 0)" opacity="0.16"/><rect x="9" y="1" width="1" height="1" fill="rgb(0, 0, 154)" opacity="0.16"/><rect x="10" y="1" width="1" height="1" fill="rgb(221, 49, 0)" opacity="0.19"/><rect x="11" y="1" width="1" height="1" fill="rgb(200, 195, 0)" opacity="0.21"/><rect x="12" y="1" width="1" height="1" fill="rgb(0, 254, 60)" opacity="0.22"/><rect x="13" y="1" width="1" height="1" fill="rgb(0, 240, 0)" opacity="0.20"/><rect x="14" y="1" width="1" height="1" fill="rgb(238, 1, 0)" opacity="0.18"/><rect x="15" y="1" width="1" height="1" fill="rgb(0, 221, 0)" opacity="0.18"/><rect x="16" y="1" width="1" height="1" fill="rgb(0, 170, 0)" opacity="0.19"/><rect x="17" y="1" width="1" height="1" fill="rgb(0, 0, 198)" opacity="0.17"/><rect x="6" y="2" width="1" height="1" fill="rgb(200, 179, 0)" opacity="0.16"/><rect x="7" y="2" width="1" height="1" fill="rgb(225, 19, 0)" opacity="0.18"/><rect x="8" y="2" width="1" height="1" fill="rgb(0, 185, 0)" opacity="0.23"/><rect x="9" y="2" width="1" height="1" fill="rgb(0, 0, 209)" opacity="0.26"/><rect x="10" y="2" width="1" height="1" fill="rgb(0, 0, 174)" opacity="0.25"/><rect x="11" y="2" width="1" height="1" fill="rgb(228, 26, 0)" opacity="0.46"/><rect x="12" y="2" width="1" height="1" fill="rgb(0, 0, 203)" opacity="0.52"/><rect x="13" y="2" width="1" height="1" fill="rgb(0, 0, 188)" opacity="0.52"/><rect x="14" y="2" width="1" height="1" fill="rgb(0, 0, 173)" opacity="0.43"/><rect x="15" y="2" width="1" height="1" fill="rgb(200, 252, 0)" opacity="0.22"/><rect x="16" y="2" width="1" height="1" fill="rgb(0, 0, 206)" opacity="0.22"/><rect x="17" y="2" width="1" height="1" fill="rgb(40, 212, 60)" opacity="0.19"/><rect x="18" y="2" width="1" height="1" fill="rgb(0, 0, 181)" opacity="0.16"/><rect x="19" y="2" width="1" height="1" fill="rgb(249, 8, 0)" opacity="0.17"/><rect x="5" y="3" width="1" height="1" fill="rgb(0, 243, 60)" opacity="0.15"/><rect x="6" y="3" width="1" height="1" fill="rgb(0, 0, 179)" opacity="0.23"/><rect x="7" y="3" width="1" height="1" fill="rgb(232, 10, 0)" opacity="0.26"/><rect x="8" y="3" width="1" height="1" fill="rgb(120, 195, 60)" opacity="0.47"/><rect x="9" y="3" width="1" height="1" fill="rgb(0, 183, 0)" opacity="0.50"/><rect x="10" y="3" width="1" height="1" fill="rgb(245, 16, 0)" opacity="0.51"/><rect x="11" y="3" width="1" height="1" fill="rgb(40, 232, 0)" opacity="0.61"/><rect x="12" y="3" width="1" height="1" fill="rgb(0, 186, 60)" opacity="0.56"/><rect x="13" y="3" width="1" height="1" fill="rgb(0, 248, 0)" opacity="0.51"/><rect x="14" y="3" width="1" height="1" fill="rgb(0, 172, 0)" opacity="0.53"/><rect x="15" y="3" width="1" height="1" fill="rgb(222, 11, 0)" opacity="0.49"/><rect x="16" y="3" width="1" height="1" fill="rgb(0, 186, 0)" opacity="0.44"/><rect x="17" y="3" width="1" height="1" fill="rgb(200, 212, 0)" opacity="0.47"/><rect x="18" y="3" width="1" height="1" fill="rgb(40, 230, 0)" opacity="0.28"/><rect x="19" y="3" width="1" height="1" fill="rgb(0, 0, 159)" opacity="0.21"/><rect x="20" y="3" width="1" height="1" fill="rgb(0, 210, 0)" opacity="0.15"/><rect x="4" y="4" width="1" height="1" fill="rgb(0, 175, 0)" opacity="0.17"/><rect x="5" y="4" width="1" height="1" fill="rgb(120, 179, 0)" opacity="0.25"/><rect x="6" y="4" width="1" height="1" fill="rgb(120, 249, 60)" opacity="0.45"/><rect x="7" y="4" width="1" height="1" fill="rgb(0, 180, 0)" opacity="0.57"/><rect x="8" y="4" width="1" height="1" fill="rgb(120, 212, 60)" opacity="0.54"/><rect x="9" y="4" width="1" height="1" fill="rgb(200, 180, 0)" opacity="0.55"/><rect x="10" y="4" width="1" height="1" fill="rgb(0, 0, 152)" opacity="0.57"/><rect x="11" y="4" width="1" height="1" fill="rgb(200, 233, 60)" opacity="0.59"/><rect x="12" y="4" width="1" height="1" fill="rgb(0, 0, 188)" opacity="0.58"/><rect x="13" y="4" width="1" height="1" fill="rgb(0, 236, 0)" opacity="0.67"/><rect x="14" y="4" width="1" height="1" fill="rgb(40, 200, 60)" opacity="0.66"/><rect x="15" y="4" width="1" height="1" fill="rgb(247, 51, 0)" opacity="0.67"/><rect x="16" y="4" width="1" height="1" fill="rgb(120, 197, 0)" opacity="0.60"/><rect x="17" y="4" width="1" height="1" fill="rgb(0, 187, 60)" opacity="0.52"/><rect x="18" y="4" width="1" height="1" fill="rgb(0, 175, 0)" opacity="0.54"/><rect x="19" y="4" width="1" height="1" fill="rgb(0, 0, 210)" opacity="0.41"/><rect x="20" y="4" width="1" height="1" fill="rgb(246, 24, 0)" opacity="0.23"/><rect x="21" y="4" width="1" height="1" fill="rgb(200, 210, 60)" opacity="0.17"/><rect x="3" y="5" width="1" height="1" fill="rgb(200, 205, 0)" opacity="0.18"/><rect x="4" y="5" width="1" height="1" fill="rgb(242, 19, 0)" opacity="0.23"/><rect x="5" y="5" width="1" height="1" fill="rgb(0, 252, 60)" opacity="0.45"/><rect x="6" y="5" width="1" height="1" fill="rgb(0, 0, 184)" opacity="0.48"/><rect x="7" y="5" width="1" height="1" fill="rgb(0, 0, 156)" opacity="0.66"/><rect x="8" y="5" width="1" height="1" fill="rgb(0, 0, 163)" opacity="0.65"/><rect x="9" y="5" width="1" height="1" fill="rgb(0, 217, 0)" opacity="0.61"/><rect x="10" y="5" width="1" height="1" fill="rgb(0, 192, 60)" opacity="0.70"/><rect x="11" y="5" width="1" height="1" fill="rgb(0, 0, 178)" opacity="0.66"/><rect x="12" y="5" width="1" height="1" fill="rgb(200, 236, 0)" opacity="0.70"/><rect x="13" y="5" width="1" height="1" fill="rgb(0, 198, 60)" opacity="0.81"/><rect x="14" y="5" width="1" height="1" fill="rgb(120, 186, 60)" opacity="0.65"/><rect x="15" y="5" width="1" height="1" fill="rgb(120, 170, 0)" opacity="0.68"/><rect x="16" y="5" width="1" height="1" fill="rgb(0, 196, 0)" opacity="0.61"/><rect x="17" y="5" width="1" height="1" fill="rgb(40, 181, 0)" opacity="0.58"/><rect x="18" y="5" width="1" height="1" fill="rgb(40, 172, 0)" opacity="0.50"/><rect x="19" y="5" width="1" height="1" fill="rgb(40, 223, 60)" opacity="0.58"/><rect x="20" y="5" width="1" height="1" fill="rgb(224, 27, 0)" opacity="0.49"/><rect x="21" y="5" width="1" height="1" fill="rgb(0, 0, 192)" opacity="0.24"/><rect x="22" y="5" width="1" height="1" fill="rgb(0, 230, 60)" opacity="0.19"/><rect x="2" y="6" width="1" height="1" fill="rgb(0, 181, 60)" opacity="0.16"/><rect x="3" y="6" width="1" height="1" fill="rgb(255, 40, 0)" opacity="0.19"/><rect x="4" y="6" width="1" height="1" fill="rgb(40, 241, 0)" opacity="0.46"/><rect x="5" y="6" width="1" height="1" fill="rgb(0, 248, 0)" opacity="0.57"/><rect x="6" y="6" width="1" height="1" fill="rgb(40, 237, 60)" opacity="0.54"/><rect x="7" y="6" width="1" height="1" fill="rgb(0, 234, 60)" opacity="0.56"/><rect x="8" y="6" width="1" height="1" fill="rgb(120, 236, 0)" opacity="0.69"/><rect x="9" y="6" width="1" height="1" fill="rgb(200, 178, 60)" opacity="0.71"/><rect x="10" y="6" width="1" height="1" fill="rgb(40, 221, 0)" opacity="0.75"/><rect x="11" y="6" width="1" height="1" fill="rgb(0, 0, 205)" opacity="0.87"/><rect x="12" y="6" width="1" height="1" fill="rgb(200, 230, 0)" opacity="0.70"/><rect x="13" y="6" width="1" height="1" fill="rgb(40, 173, 0)" opacity="0.83"/><rect x="14" y="6" width="1" height="1" fill="rgb(0, 174, 0)" opacity="0.72"/><rect x="15" y="6" width="1" height="1" fill="rgb(40, 211, 0)" opacity="0.79"/><rect x="16" y="6" width="1" height="1" fill="rgb(0, 0, 165)" opacity="0.81"/><rect x="17" y="6" width="1" height="1" fill="rgb(200, 195, 60)" opacity="0.60"/><rect x="18" y="6" width="1" height="1" fill="rgb(200, 237, 0)" opacity="0.65"/><rect x="19" y="6" width="1" height="1" fill="rgb(0, 238, 0)" opacity="0.65"/><rect x="20" y="6" width="1" height="1" fill="rgb(0, 187, 0)" opacity="0.58"/><rect x="21" y="6" width="1" height="1" fill="rgb(240, 57, 0)" opacity="0.50"/><rect x="22" y="6" width="1" height="1" fill="rgb(232, 56, 0)" opacity="0.19"/><rect x="23" y="6" width="1" height="1" fill="rgb(0, 186, 0)" opacity="0.15"/><rect x="2" y="7" width="1" height="1" fill="rgb(200, 223, 0)" opacity="0.18"/><rect x="3" y="7" width="1" height="1" fill="rgb(0, 172, 0)" opacity="0.25"/><rect x="4" y="7" width="1" height="1" fill="rgb(0, 216, 0)" opacity="0.50"/><rect x="5" y="7" width="1" height="1" fill="rgb(0, 194, 60)" opacity="0.51"/><rect x="6" y="7" width="1" height="1" fill="rgb(0, 0, 220)" opacity="0.67"/><rect x="7" y="7" width="1" height="1" fill="rgb(0, 231, 0)" opacity="0.64"/><rect x="8" y="7" width="1" height="1" fill="rgb(230, 18, 0)" opacity="0.84"/><rect x="9" y="7" width="1" height="1" fill="rgb(0, 0, 157)" opacity="0.71"/><rect x="10" y="7" width="1" height="1" fill="rgb(0, 179, 0)" opacity="0.79"/><rect x="11" y="7" width="1" height="1" fill="rgb(120, 215, 0)" opacity="0.86"/><rect x="12" y="7" width="1" height="1" fill="rgb(0, 0, 155)" opacity="0.93"/><rect x="13" y="7" width="1" height="1" fill="rgb(249, 23, 0)" opacity="0.91"/><rect x="14" y="7" width="1" height="1" fill="rgb(200, 194, 0)" opacity="0.74"/><rect x="15" y="7" width="1" height="1" fill="rgb(0, 211, 60)" opacity="0.84"/><rect x="16" y="7" width="1" height="1" fill="rgb(241, 51, 0)" opacity="0.85"/><rect x="17" y="7" width="1" height="1" fill="rgb(0, 184, 60)" opacity="0.67"/><rect x="18" y="7" width="1" height="1" fill="rgb(40, 238, 60)" opacity="0.76"/><rect x="19" y="7" width="1" height="1" fill="rgb(0, 193, 0)" opacity="0.61"/><rect x="20" y="7" width="1" height="1" fill="rgb(0, 0, 195)" opacity="0.66"/><rect x="21" y="7" width="1" height="1" fill="rgb(0, 176, 0)" opacity="0.57"/><rect x="22" y="7" width="1" height="1" fill="rgb(0, 213, 60)" opacity="0.25"/><rect x="23" y="7" width="1" height="1" fill="rgb(200, 219, 60)" opacity="0.20"/><rect x="1" y="8" width="1" height="1" fill="rgb(200, 220, 0)" opacity="0.14"/><rect x="2" y="8" width="1" height="1" fill="rgb(0, 0, 180)" opacity="0.21"/><rect x="3" y="8" width="1" height="1" fill="rgb(0, 176, 60)" opacity="0.40"/><rect x="4" y="8" width="1" height="1" fill="rgb(237, 57, 0)" opacity="0.53"/><rect x="5" y="8" width="1" height="1" fill="rgb(200, 223, 0)" opacity="0.65"/><rect x="6" y="8" width="1" height="1" fill="rgb(200, 179, 0)" opacity="0.67"/><rect x="7" y="8" width="1" height="1" fill="rgb(120, 219, 0)" opacity="0.83"/><rect x="8" y="8" width="1" height="1" fill="rgb(0, 246, 60)" opacity="0.90"/><rect x="9" y="8" width="1" height="1" fill="rgb(120, 237, 0)" opacity="0.81"/><rect x="10" y="8" width="1" height="1" fill="rgb(40, 253, 0)" opacity="0.91"/><rect x="11" y="8" width="1" height="1" fill="rgb(0, 173, 0)" opacity="0.90"/><rect x="12" y="8" width="1" height="1" fill="rgb(120, 222, 0)" opacity="0.97"/><rect x="13" y="8" width="1" height="1" fill="rgb(200, 176, 0)" opacity="0.77"/><rect x="14" y="8" width="1" height="1" fill="rgb(120, 224, 0)" opacity="0.99"/><rect x="15" y="8" width="1" height="1" fill="rgb(0, 236, 60)" opacity="0.78"/><rect x="16" y="8" width="1" height="1" fill="rgb(200, 201, 0)" opacity="0.73"/><rect x="17" y="8" width="1" height="1" fill="rgb(0, 185, 0)" opacity="0.77"/><rect x="18" y="8" width="1" height="1" fill="rgb(243, 28, 0)" opacity="0.68"/><rect x="19" y="8" width="1" height="1" fill="rgb(40, 246, 60)" opacity="0.67"/><rect x="20" y="8" width="1" height="1" fill="rgb(40, 187, 0)" opacity="0.58"/><rect x="21" y="8" width="1" height="1" fill="rgb(0, 0, 189)" opacity="0.60"/><rect x="22" y="8" width="1" height="1" fill="rgb(40, 215, 0)" opacity="0.48"/><rect x="23" y="8" width="1" height="1" fill="rgb(0, 245, 0)" opacity="0.24"/><rect x="24" y="8" width="1" height="1" fill="rgb(0, 0, 181)" opacity="0.16"/><rect x="1" y="9" width="1" height="1" fill="rgb(0, 195, 0)" opacity="0.16"/><rect x="2" y="9" width="1" height="1" fill="rgb(221, 39, 0)" opacity="0.21"/><rect x="3" y="9" width="1" height="1" fill="rgb(237, 4, 0)" opacity="0.54"/><rect x="4" y="9" width="1" height="1" fill="rgb(200, 190, 0)" opacity="0.62"/><rect x="5" y="9" width="1" height="1" fill="rgb(40, 231, 0)" opacity="0.64"/><rect x="6" y="9" width="1" height="1" fill="rgb(0, 187, 0)" opacity="0.73"/><rect x="7" y="9" width="1" height="1" fill="rgb(120, 197, 60)" opacity="0.85"/><rect x="8" y="9" width="1" height="1" fill="rgb(40, 189, 0)" opacity="0.88"/><rect x="9" y="9" width="1" height="1" fill="rgb(40, 211, 0)" opacity="0.86"/><rect x="10" y="9" width="1" height="1" fill="rgb(120, 182, 0)" opacity="0.77"/><rect x="11" y="9" width="1" height="1" fill="rgb(0, 0, 212)" opacity="0.95"/><rect x="12" y="9" width="1" height="1" fill="rgb(0, 171, 0)" opacity="0.80"/><rect x="13" y="9" width="1" height="1" fill="rgb(40, 180, 60)" opacity="0.93"/><rect x="14" y="9" width="1" height="1" fill="rgb(0, 206, 0)" opacity="0.84"/><rect x="15" y="9" width="1" height="1" fill="rgb(0, 216, 0)" opacity="0.93"/><rect x="16" y="9" width="1" height="1" fill="rgb(120, 205, 0)" opacity="0.86"/><rect x="17" y="9" width="1" height="1" fill="rgb(253, 15, 0)" opacity="0.74"/><rect x="18" y="9" width="1" height="1" fill="rgb(40, 173, 60)" opacity="0.81"/><rect x="19" y="9" width="1" height="1" fill="rgb(40, 242, 60)" opacity="0.75"/><rect x="20" y="9" width="1" height="1" fill="rgb(0, 242, 0)" opacity="0.59"/><rect x="21" y="9" width="1" height="1" fill="rgb(0, 206, 0)" opacity="0.60"/><rect x="22" y="9" width="1" height="1" fill="rgb(40, 242, 0)" opacity="0.53"/><rect x="23" y="9" width="1" height="1" fill="rgb(200, 178, 0)" opacity="0.27"/><rect x="24" y="9" width="1" height="1" fill="rgb(0, 0, 160)" opacity="0.17"/><rect x="0" y="10" width="1" height="1" fill="rgb(0, 0, 190)" opacity="0.12"/><rect x="1" y="10" width="1" height="1" fill="rgb(0, 188, 60)" opacity="0.19"/><rect x="2" y="10" width="1" height="1" fill="rgb(253, 21, 0)" opacity="0.47"/><rect x="3" y="10" width="1" height="1" fill="rgb(40, 213, 0)" opacity="0.54"/><rect x="4" y="10" width="1" height="1" fill="rgb(200, 179, 0)" opacity="0.61"/><rect x="5" y="10" width="1" height="1" fill="rgb(40, 255, 0)" opacity="0.76"/><rect x="6" y="10" width="1" height="1" fill="rgb(200, 229, 0)" opacity="0.77"/><rect x="7" y="10" width="1" height="1" fill="rgb(120, 184, 60)" opacity="0.92"/><rect x="8" y="10" width="1" height="1" fill="rgb(120, 190, 0)" opacity="0.83"/><rect x="9" y="10" width="1" height="1" fill="rgb(40, 237, 0)" opacity="0.99"/><rect x="10" y="10" width="1" height="1" fill="rgb(0, 0, 189)" opacity="0.93"/><rect x="11" y="10" width="1" height="1" fill="rgb(0, 189, 0)" opacity="0.94"/><rect x="12" y="10" width="1" height="1" fill="rgb(0, 0, 211)" opacity="0.98"/><rect x="13" y="10" width="1" height="1" fill="rgb(0, 0, 163)" opacity="0.80"/><rect x="14" y="10" width="1" height="1" fill="rgb(0, 245, 60)" opacity="0.90"/><rect x="15" y="10" width="1" height="1" fill="rgb(40, 193, 60)" opacity="0.79"/><rect x="16" y="10" width="1" height="1" fill="rgb(200, 209, 60)" opacity="0.96"/><rect x="17" y="10" width="1" height="1" fill="rgb(40, 221, 0)" opacity="0.87"/><rect x="18" y="10" width="1" height="1" fill="rgb(223, 13, 0)" opacity="0.93"/><rect x="19" y="10" width="1" height="1" fill="rgb(200, 219, 0)" opacity="0.83"/><rect x="20" y="10" width="1" height="1" fill="rgb(0, 0, 180)" opacity="0.78"/><rect x="21" y="10" width="1" height="1" fill="rgb(120, 217, 0)" opacity="0.66"/><rect x="22" y="10" width="1" height="1" fill="rgb(120, 190, 0)" opacity="0.58"/><rect x="23" y="10" width="1" height="1" fill="rgb(0, 0, 216)" opacity="0.39"/><rect x="24" y="10" width="1" height="1" fill="rgb(40, 249, 0)" opacity="0.18"/><rect x="25" y="10" width="1" height="1" fill="rgb(0, 170, 0)" opacity="0.14"/><rect x="0" y="11" width="1" height="1" fill="rgb(0, 0, 184)" opacity="0.15"/><rect x="1" y="11" width="1" height="1" fill="rgb(120, 231, 0)" opacity="0.24"/><rect x="2" y="11" width="1" height="1" fill="rgb(40, 234, 0)" opacity="0.50"/><rect x="3" y="11" width="1" height="1" fill="rgb(120, 181, 0)" opacity="0.48"/><rect x="4" y="11" width="1" height="1" fill="rgb(0, 233, 0)" opacity="0.61"/><rect x="5" y="11" width="1" height="1" fill="rgb(40, 241, 60)" opacity="0.76"/><rect x="6" y="11" width="1" height="1" fill="rgb(0, 0, 159)" opacity="0.83"/><rect x="7" y="11" width="1" height="1" fill="rgb(0, 0, 200)" opacity="0.89"/><rect x="8" y="11" width="1" height="1" fill="rgb(120, 185, 0)" opacity="0.97"/><rect x="9" y="11" width="1" height="1" fill="rgb(0, 230, 0)" opacity="0.89"/><rect x="10" y="11" width="1" height="1" fill="rgb(0, 171, 0)" opacity="0.82"/><rect x="11" y="11" width="1" height="1" fill="rgb(40, 239, 0)" opacity="0.94"/><rect x="12" y="11" width="1" height="1" fill="rgb(40, 181, 0)" opacity="0.80"/><rect x="13" y="11" width="1" height="1" fill="rgb(40, 212, 0)" opacity="0.89"/><rect x="14" y="11" width="1" height="1" fill="rgb(120, 212, 60)" opacity="0.77"/><rect x="15" y="11" width="1" height="1" fill="rgb(226, 8, 0)" opacity="0.92"/><rect x="16" y="11" width="1" height="1" fill="rgb(0, 193, 60)" opacity="0.76"/><rect x="17" y="11" width="1" height="1" fill="rgb(0, 181, 0)" opacity="0.76"/><rect x="18" y="11" width="1" height="1" fill="rgb(120, 225, 0)" opacity="0.81"/><rect x="19" y="11" width="1" height="1" fill="rgb(0, 235, 0)" opacity="0.85"/><rect x="20" y="11" width="1" height="1" fill="rgb(120, 219, 0)" opacity="0.81"/><rect x="21" y="11" width="1" height="1" fill="rgb(200, 221, 0)" opacity="0.73"/><rect x="22" y="11" width="1" height="1" fill="rgb(200, 254, 0)" opacity="0.52"/><rect x="23" y="11" width="1" height="1" fill="rgb(239, 41, 0)" opacity="0.45"/><rect x="24" y="11" width="1" height="1" fill="rgb(200, 196, 0)" opacity="0.23"/><rect x="25" y="11" width="1" height="1" fill="rgb(0, 248, 0)" opacity="0.16"/><rect x="0" y="12" width="1" height="1" fill="rgb(0, 240, 0)" opacity="0.16"/><rect x="1" y="12" width="1" height="1" fill="rgb(0, 243, 0)" opacity="0.23"/><rect x="2" y="12" width="1" height="1" fill="rgb(0, 0, 175)" opacity="0.51"/><rect x="3" y="12" width="1" height="1" fill="rgb(0, 0, 211)" opacity="0.58"/><rect x="4" y="12" width="1" height="1" fill="rgb(0, 212, 0)" opacity="0.61"/><rect x="5" y="12" width="1" height="1" fill="rgb(0, 227, 0)" opacity="0.82"/><rect x="6" y="12" width="1" height="1" fill="rgb(0, 241, 0)" opacity="0.72"/><rect x="7" y="12" width="1" height="1" fill="rgb(200, 212, 0)" opacity="0.77"/><rect x="8" y="12" width="1" height="1" fill="rgb(40, 206, 0)" opacity="0.94"/><rect x="9" y="12" width="1" height="1" fill="rgb(0, 191, 0)" opacity="0.86"/><rect x="10" y="12" width="1" height="1" fill="rgb(0, 254, 0)" opacity="0.94"/><rect x="11" y="12" width="1" height="1" fill="rgb(200, 218, 0)" opacity="0.79"/><rect x="12" y="12" width="1" height="1" fill="rgb(0, 174, 60)" opacity="0.78"/><rect x="13" y="12" width="1" height="1" fill="rgb(200, 213, 0)" opacity="0.82"/><rect x="14" y="12" width="1" height="1" fill="rgb(0, 212, 0)" opacity="0.93"/><rect x="15" y="12" width="1" height="1" fill="rgb(120, 221, 0)" opacity="0.87"/><rect x="16" y="12" width="1" height="1" fill="rgb(200, 249, 60)" opacity="0.94"/><rect x="17" y="12" width="1" height="1" fill="rgb(120, 229, 60)" opacity="0.78"/><rect x="18" y="12" width="1" height="1" fill="rgb(0, 0, 217)" opacity="0.82"/><rect x="19" y="12" width="1" height="1" fill="rgb(0, 223, 0)" opacity="0.89"/><rect x="20" y="12" width="1" height="1" fill="rgb(120, 248, 60)" opacity="0.75"/><rect x="21" y="12" width="1" height="1" fill="rgb(200, 209, 0)" opacity="0.61"/><rect x="22" y="12" width="1" height="1" fill="rgb(200, 201, 60)" opacity="0.65"/><rect x="23" y="12" width="1" height="1" fill="rgb(200, 183, 0)" opacity="0.48"/><rect x="24" y="12" width="1" height="1" fill="rgb(0, 200, 0)" opacity="0.24"/><rect x="25" y="12" width="1" height="1" fill="rgb(0, 191, 60)" opacity="0.15"/><rect x="0" y="13" width="1" height="1" fill="rgb(200, 182, 0)" opacity="0.14"/><rect x="1" y="13" width="1" height="1" fill="rgb(0, 228, 0)" opacity="0.21"/><rect x="2" y="13" width="1" height="1" fill="rgb(240, 11, 0)" opacity="0.42"/><rect x="3" y="13" width="1" height="1" fill="rgb(120, 237, 0)" opacity="0.55"/><rect x="4" y="13" width="1" height="1" fill="rgb(40, 175, 0)" opacity="0.65"/><rect x="5" y="13" width="1" height="1" fill="rgb(120, 211, 0)" opacity="0.83"/><rect x="6" y="13" width="1" height="1" fill="rgb(0, 230, 0)" opacity="0.76"/><rect x="7" y="13" width="1" height="1" fill="rgb(0, 177, 0)" opacity="0.94"/><rect x="8" y="13" width="1" height="1" fill="rgb(0, 230, 0)" opacity="0.91"/><rect x="9" y="13" width="1" height="1" fill="rgb(0, 241, 0)" opacity="0.80"/><rect x="10" y="13" width="1" height="1" fill="rgb(0, 176, 0)" opacity="0.93"/><rect x="11" y="13" width="1" height="1" fill="rgb(120, 205, 0)" opacity="0.83"/><rect x="12" y="13" width="1" height="1" fill="rgb(120, 226, 0)" opacity="0.79"/><rect x="13" y="13" width="1" height="1" fill="rgb(0, 185, 0)" opacity="0.80"/><rect x="14" y="13" width="1" height="1" fill="rgb(40, 255, 0)" opacity="0.84"/><rect x="15" y="13" width="1" height="1" fill="rgb(200, 184, 0)" opacity="0.99"/><rect x="16" y="13" width="1" height="1" fill="rgb(0, 193, 0)" opacity="0.78"/><rect x="17" y="13" width="1" height="1" fill="rgb(0, 229, 60)" opacity="0.98"/><rect x="18" y="13" width="1" height="1" fill="rgb(0, 0, 155)" opacity="0.74"/><rect x="19" y="13" width="1" height="1" fill="rgb(40, 238, 60)" opacity="0.87"/><rect x="20" y="13" width="1" height="1" fill="rgb(0, 0, 186)" opacity="0.84"/><rect x="21" y="13" width="1" height="1" fill="rgb(231, 17, 0)" opacity="0.70"/><rect x="22" y="13" width="1" height="1" fill="rgb(0, 0, 169)" opacity="0.65"/><rect x="23" y="13" width="1" height="1" fill="rgb(0, 0, 209)" opacity="0.53"/><rect x="24" y="13" width="1" height="1" fill="rgb(120, 170, 0)" opacity="0.20"/><rect x="25" y="13" width="1" height="1" fill="rgb(40, 252, 0)" opacity="0.16"/><rect x="0" y="14" width="1" height="1" fill="rgb(40, 236, 0)" opacity="0.15"/><rect x="1" y="14" width="1" height="1" fill="rgb(200, 184, 60)" opacity="0.20"/><rect x="2" y="14" width="1" height="1" fill="rgb(0, 202, 0)" opacity="0.47"/><rect x="3" y="14" width="1" height="1" fill="rgb(251, 16, 0)" opacity="0.49"/><rect x="4" y="14" width="1" height="1" fill="rgb(200, 176, 60)" opacity="0.72"/><rect x="5" y="14" width="1" height="1" fill="rgb(229, 38, 0)" opacity="0.63"/><rect x="6" y="14" width="1" height="1" fill="rgb(200, 225, 60)" opacity="0.85"/><rect x="7" y="14" width="1" height="1" fill="rgb(0, 173, 0)" opacity="0.95"/><rect x="8" y="14" width="1" height="1" fill="rgb(200, 239, 0)" opacity="0.91"/><rect x="9" y="14" width="1" height="1" fill="rgb(0, 0, 204)" opacity="0.76"/><rect x="10" y="14" width="1" height="1" fill="rgb(200, 249, 0)" opacity="0.94"/><rect x="11" y="14" width="1" height="1" fill="rgb(200, 253, 0)" opacity="0.84"/><rect x="12" y="14" width="1" height="1" fill="rgb(200, 233, 60)" opacity="0.77"/><rect x="13" y="14" width="1" height="1" fill="rgb(0, 216, 0)" opacity="0.78"/><rect x="14" y="14" width="1" height="1" fill="rgb(0, 246, 0)" opacity="0.94"/><rect x="15" y="14" width="1" height="1" fill="rgb(0, 175, 0)" opacity="0.85"/><rect x="16" y="14" width="1" height="1" fill="rgb(120, 181, 0)" opacity="0.87"/><rect x="17" y="14" width="1" height="1" fill="rgb(200, 174, 0)" opacity="0.82"/><rect x="18" y="14" width="1" height="1" fill="rgb(0, 0, 180)" opacity="0.83"/><rect x="19" y="14" width="1" height="1" fill="rgb(0, 0, 179)" opacity="0.76"/><rect x="20" y="14" width="1" height="1" fill="rgb(0, 248, 0)" opacity="0.66"/><rect x="21" y="14" width="1" height="1" fill="rgb(40, 177, 0)" opacity="0.64"/><rect x="22" y="14" width="1" height="1" fill="rgb(120, 197, 60)" opacity="0.61"/><rect x="23" y="14" width="1" height="1" fill="rgb(242, 15, 0)" opacity="0.43"/><rect x="24" y="14" width="1" height="1" fill="rgb(120, 190, 0)" opacity="0.21"/><rect x="25" y="14" width="1" height="1" fill="rgb(120, 209, 60)" opacity="0.15"/><rect x="0" y="15" width="1" height="1" fill="rgb(120, 193, 0)" opacity="0.14"/><rect x="1" y="15" width="1" height="1" fill="rgb(40, 176, 0)" opacity="0.23"/><rect x="2" y="15" width="1" height="1" fill="rgb(0, 236, 0)" opacity="0.45"/><rect x="3" y="15" width="1" height="1" fill="rgb(0, 253, 0)" opacity="0.49"/><rect x="4" y="15" width="1" height="1" fill="rgb(0, 0, 196)" opacity="0.57"/><rect x="5" y="15" width="1" height="1" fill="rgb(227, 1, 0)" opacity="0.81"/><rect x="6" y="15" width="1" height="1" fill="rgb(0, 227, 60)" opacity="0.74"/><rect x="7" y="15" width="1" height="1" fill="rgb(0, 236, 0)" opacity="0.81"/><rect x="8" y="15" width="1" height="1" fill="rgb(0, 175, 0)" opacity="0.88"/><rect x="9" y="15" width="1" height="1" fill="rgb(233, 19, 0)" opacity="0.85"/><rect x="10" y="15" width="1" height="1" fill="rgb(200, 187, 0)" opacity="0.83"/><rect x="11" y="15" width="1" height="1" fill="rgb(0, 218, 0)" opacity="0.96"/><rect x="12" y="15" width="1" height="1" fill="rgb(120, 227, 0)" opacity="0.85"/><rect x="13" y="15" width="1" height="1" fill="rgb(0, 198, 0)" opacity="0.84"/><rect x="14" y="15" width="1" height="1" fill="rgb(0, 187, 0)" opacity="0.94"/><rect x="15" y="15" width="1" height="1" fill="rgb(40, 171, 0)" opacity="0.98"/><rect x="16" y="15" width="1" height="1" fill="rgb(0, 215, 0)" opacity="0.81"/><rect x="17" y="15" width="1" height="1" fill="rgb(120, 181, 0)" opacity="0.85"/><rect x="18" y="15" width="1" height="1" fill="rgb(0, 0, 199)" opacity="0.94"/><rect x="19" y="15" width="1" height="1" fill="rgb(0, 205, 0)" opacity="0.87"/><rect x="20" y="15" width="1" height="1" fill="rgb(230, 22, 0)" opacity="0.74"/><rect x="21" y="15" width="1" height="1" fill="rgb(225, 47, 0)" opacity="0.60"/><rect x="22" y="15" width="1" height="1" fill="rgb(120, 189, 0)" opacity="0.58"/><rect x="23" y="15" width="1" height="1" fill="rgb(120, 172, 0)" opacity="0.43"/><rect x="24" y="15" width="1" height="1" fill="rgb(0, 0, 201)" opacity="0.19"/><rect x="25" y="15" width="1" height="1" fill="rgb(239, 30, 0)" opacity="0.15"/><rect x="1" y="16" width="1" height="1" fill="rgb(0, 179, 0)" opacity="0.18"/><rect x="2" y="16" width="1" height="1" fill="rgb(40, 242, 0)" opacity="0.28"/><rect x="3" y="16" width="1" height="1" fill="rgb(120, 252, 60)" opacity="0.54"/><rect x="4" y="16" width="1" height="1" fill="rgb(0, 216, 0)" opacity="0.65"/><rect x="5" y="16" width="1" height="1" fill="rgb(200, 249, 60)" opacity="0.71"/><rect x="6" y="16" width="1" height="1" fill="rgb(0, 0, 158)" opacity="0.82"/><rect x="7" y="16" width="1" height="1" fill="rgb(120, 218, 0)" opacity="0.88"/><rect x="8" y="16" width="1" height="1" fill="rgb(40, 204, 60)" opacity="0.82"/><rect x="9" y="16" width="1" height="1" fill="rgb(200, 189, 0)" opacity="0.82"/><rect x="10" y="16" width="1" height="1" fill="rgb(0, 198, 0)" opacity="0.98"/><rect x="11" y="16" width="1" height="1" fill="rgb(0, 170, 60)" opacity="0.96"/><rect x="12" y="16" width="1" height="1" fill="rgb(200, 180, 0)" opacity="0.82"/><rect x="13" y="16" width="1" height="1" fill="rgb(221, 20, 0)" opacity="0.95"/><rect x="14" y="16" width="1" height="1" fill="rgb(0, 220, 0)" opacity="0.96"/><rect x="15" y="16" width="1" height="1" fill="rgb(251, 51, 0)" opacity="0.89"/><rect x="16" y="16" width="1" height="1" fill="rgb(40, 206, 60)" opacity="0.81"/><rect x="17" y="16" width="1" height="1" fill="rgb(0, 211, 0)" opacity="0.95"/><rect x="18" y="16" width="1" height="1" fill="rgb(40, 183, 0)" opacity="0.89"/><rect x="19" y="16" width="1" height="1" fill="rgb(0, 231, 0)" opacity="0.78"/><rect x="20" y="16" width="1" height="1" fill="rgb(0, 231, 0)" opacity="0.64"/><rect x="21" y="16" width="1" height="1" fill="rgb(40, 220, 0)" opacity="0.58"/><rect x="22" y="16" width="1" height="1" fill="rgb(40, 193, 0)" opacity="0.57"/><rect x="23" y="16" width="1" height="1" fill="rgb(120, 242, 0)" opacity="0.26"/><rect x="24" y="16" width="1" height="1" fill="rgb(0, 190, 0)" opacity="0.18"/><rect x="1" y="17" width="1" height="1" fill="rgb(0, 199, 0)" opacity="0.17"/><rect x="2" y="17" width="1" height="1" fill="rgb(40, 187, 0)" opacity="0.23"/><rect x="3" y="17" width="1" height="1" fill="rgb(120, 220, 0)" opacity="0.42"/><rect x="4" y="17" width="1" height="1" fill="rgb(0, 185, 0)" opacity="0.54"/><rect x="5" y="17" width="1" height="1" fill="rgb(120, 185, 0)" opacity="0.72"/><rect x="6" y="17" width="1" height="1" fill="rgb(0, 231, 0)" opacity="0.63"/><rect x="7" y="17" width="1" height="1" fill="rgb(40, 253, 0)" opacity="0.75"/><rect x="8" y="17" width="1" height="1" fill="rgb(200, 188, 60)" opacity="0.86"/><rect x="9" y="17" width="1" height="1" fill="rgb(238, 51, 0)" opacity="0.95"/><rect x="10" y="17" width="1" height="1" fill="rgb(200, 183, 0)" opacity="0.97"/><rect x="11" y="17" width="1" height="1" fill="rgb(40, 189, 0)" opacity="0.82"/><rect x="12" y="17" width="1" height="1" fill="rgb(120, 205, 0)" opacity="0.83"/><rect x="13" y="17" width="1" height="1" fill="rgb(0, 0, 175)" opacity="0.84"/><rect x="14" y="17" width="1" height="1" fill="rgb(0, 176, 0)" opacity="0.75"/><rect x="15" y="17" width="1" height="1" fill="rgb(0, 255, 0)" opacity="0.80"/><rect x="16" y="17" width="1" height="1" fill="rgb(120, 195, 60)" opacity="0.74"/><rect x="17" y="17" width="1" height="1" fill="rgb(120, 241, 0)" opacity="0.75"/><rect x="18" y="17" width="1" height="1" fill="rgb(40, 249, 0)" opacity="0.70"/><rect x="19" y="17" width="1" height="1" fill="rgb(120, 201, 0)" opacity="0.65"/><rect x="20" y="17" width="1" height="1" fill="rgb(0, 0, 171)" opacity="0.65"/><rect x="21" y="17" width="1" height="1" fill="rgb(40, 204, 0)" opacity="0.61"/><rect x="22" y="17" width="1" height="1" fill="rgb(252, 29, 0)" opacity="0.42"/><rect x="23" y="17" width="1" height="1" fill="rgb(243, 0, 0)" opacity="0.25"/><rect x="24" y="17" width="1" height="1" fill="rgb(235, 50, 0)" opacity="0.19"/><rect x="1" y="18" width="1" height="1" fill="rgb(200, 209, 0)" opacity="0.16"/><rect x="2" y="18" width="1" height="1" fill="rgb(40, 222, 0)" opacity="0.18"/><rect x="3" y="18" width="1" height="1" fill="rgb(0, 0, 191)" opacity="0.42"/><rect x="4" y="18" width="1" height="1" fill="rgb(40, 254, 0)" opacity="0.54"/><rect x="5" y="18" width="1" height="1" fill="rgb(40, 209, 0)" opacity="0.67"/><rect x="6" y="18" width="1" height="1" fill="rgb(40, 182, 0)" opacity="0.61"/><rect x="7" y="18" width="1" height="1" fill="rgb(223, 47, 0)" opacity="0.65"/><rect x="8" y="18" width="1" height="1" fill="rgb(0, 196, 0)" opacity="0.69"/><rect x="9" y="18" width="1" height="1" fill="rgb(242, 11, 0)" opacity="0.80"/><rect x="10" y="18" width="1" height="1" fill="rgb(0, 0, 214)" opacity="0.73"/><rect x="11" y="18" width="1" height="1" fill="rgb(0, 0, 218)" opacity="0.94"/><rect x="12" y="18" width="1" height="1" fill="rgb(0, 172, 0)" opacity="0.76"/><rect x="13" y="18" width="1" height="1" fill="rgb(40, 244, 60)" opacity="0.86"/><rect x="14" y="18" width="1" height="1" fill="rgb(120, 233, 0)" opacity="0.94"/><rect x="15" y="18" width="1" height="1" fill="rgb(0, 0, 199)" opacity="0.95"/><rect x="16" y="18" width="1" height="1" fill="rgb(40, 193, 0)" opacity="0.73"/><rect x="17" y="18" width="1" height="1" fill="rgb(0, 218, 0)" opacity="0.80"/><rect x="18" y="18" width="1" height="1" fill="rgb(120, 226, 0)" opacity="0.65"/><rect x="19" y="18" width="1" height="1" fill="rgb(120, 228, 60)" opacity="0.65"/><rect x="20" y="18" width="1" height="1" fill="rgb(120, 199, 0)" opacity="0.60"/><rect x="21" y="18" width="1" height="1" fill="rgb(0, 0, 207)" opacity="0.52"/><rect x="22" y="18" width="1" height="1" fill="rgb(0, 246, 0)" opacity="0.39"/><rect x="23" y="18" width="1" height="1" fill="rgb(200, 202, 0)" opacity="0.19"/><rect x="24" y="18" width="1" height="1" fill="rgb(120, 240, 0)" opacity="0.16"/><rect x="2" y="19" width="1" height="1" fill="rgb(0, 0, 212)" opacity="0.15"/><rect x="3" y="19" width="1" height="1" fill="rgb(0, 0, 168)" opacity="0.25"/><rect x="4" y="19" width="1" height="1" fill="rgb(40, 235, 0)" opacity="0.41"/><rect x="5" y="19" width="1" height="1" fill="rgb(40, 213, 0)" opacity="0.54"/><rect x="6" y="19" width="1" height="1" fill="rgb(0, 224, 60)" opacity="0.57"/><rect x="7" y="19" width="1" height="1" fill="rgb(0, 179, 60)" opacity="0.73"/><rect x="8" y="19" width="1" height="1" fill="rgb(0, 200, 60)" opacity="0.79"/><rect x="9" y="19" width="1" height="1" fill="rgb(0, 240, 0)" opacity="0.82"/><rect x="10" y="19" width="1" height="1" fill="rgb(241, 2, 0)" opacity="0.88"/><rect x="11" y="19" width="1" height="1" fill="rgb(40, 198, 0)" opacity="0.79"/><rect x="12" y="19" width="1" height="1" fill="rgb(200, 173, 60)" opacity="0.91"/><rect x="13" y="19" width="1" height="1" fill="rgb(0, 0, 176)" opacity="0.82"/><rect x="14" y="19" width="1" height="1" fill="rgb(200, 195, 60)" opacity="0.78"/><rect x="15" y="19" width="1" height="1" fill="rgb(40, 210, 0)" opacity="0.83"/><rect x="16" y="19" width="1" height="1" fill="rgb(228, 10, 0)" opacity="0.80"/><rect x="17" y="19" width="1" height="1" fill="rgb(40, 186, 0)" opacity="0.67"/><rect x="18" y="19" width="1" height="1" fill="rgb(40, 249, 0)" opacity="0.61"/><rect x="19" y="19" width="1" height="1" fill="rgb(40, 196, 0)" opacity="0.66"/><rect x="20" y="19" width="1" height="1" fill="rgb(224, 40, 0)" opacity="0.51"/><rect x="21" y="19" width="1" height="1" fill="rgb(120, 248, 0)" opacity="0.46"/><rect x="22" y="19" width="1" height="1" fill="rgb(40, 182, 60)" opacity="0.21"/><rect x="23" y="19" width="1" height="1" fill="rgb(0, 206, 0)" opacity="0.19"/><rect x="2" y="20" width="1" height="1" fill="rgb(0, 0, 208)" opacity="0.12"/><rect x="3" y="20" width="1" height="1" fill="rgb(120, 195, 0)" opacity="0.19"/><rect x="4" y="20" width="1" height="1" fill="rgb(0, 0, 203)" opacity="0.23"/><rect x="5" y="20" width="1" height="1" fill="rgb(40, 254, 0)" opacity="0.50"/><rect x="6" y="20" width="1" height="1" fill="rgb(0, 0, 181)" opacity="0.47"/><rect x="7" y="20" width="1" height="1" fill="rgb(40, 245, 60)" opacity="0.59"/><rect x="8" y="20" width="1" height="1" fill="rgb(0, 245, 0)" opacity="0.64"/><rect x="9" y="20" width="1" height="1" fill="rgb(243, 1, 0)" opacity="0.67"/><rect x="10" y="20" width="1" height="1" fill="rgb(40, 255, 0)" opacity="0.75"/><rect x="11" y="20" width="1" height="1" fill="rgb(224, 23, 0)" opacity="0.67"/><rect x="12" y="20" width="1" height="1" fill="rgb(200, 231, 0)" opacity="0.85"/><rect x="13" y="20" width="1" height="1" fill="rgb(120, 220, 0)" opacity="0.78"/><rect x="14" y="20" width="1" height="1" fill="rgb(0, 177, 60)" opacity="0.77"/><rect x="15" y="20" width="1" height="1" fill="rgb(200, 197, 0)" opacity="0.72"/><rect x="16" y="20" width="1" height="1" fill="rgb(120, 235, 0)" opacity="0.74"/><rect x="17" y="20" width="1" height="1" fill="rgb(0, 0, 171)" opacity="0.74"/><rect x="18" y="20" width="1" height="1" fill="rgb(120, 202, 0)" opacity="0.59"/><rect x="19" y="20" width="1" height="1" fill="rgb(0, 0, 197)" opacity="0.60"/><rect x="20" y="20" width="1" height="1" fill="rgb(0, 173, 0)" opacity="0.47"/><rect x="21" y="20" width="1" height="1" fill="rgb(0, 184, 0)" opacity="0.28"/><rect x="22" y="20" width="1" height="1" fill="rgb(200, 178, 0)" opacity="0.17"/><rect x="23" y="20" width="1" height="1" fill="rgb(0, 0, 215)" opacity="0.12"/><rect x="3" y="21" width="1" height="1" fill="rgb(235, 15, 0)" opacity="0.15"/><rect x="4" y="21" width="1" height="1" fill="rgb(200, 197, 60)" opacity="0.18"/><rect x="5" y="21" width="1" height="1" fill="rgb(0, 0, 167)" opacity="0.27"/><rect x="6" y="21" width="1" height="1" fill="rgb(0, 0, 214)" opacity="0.43"/><rect x="7" y="21" width="1" height="1" fill="rgb(0, 237, 60)" opacity="0.55"/><rect x="8" y="21" width="1" height="1" fill="rgb(120, 185, 0)" opacity="0.53"/><rect x="9" y="21" width="1" height="1" fill="rgb(120, 184, 0)" opacity="0.58"/><rect x="10" y="21" width="1" height="1" fill="rgb(0, 221, 60)" opacity="0.61"/><rect x="11" y="21" width="1" height="1" fill="rgb(0, 252, 60)" opacity="0.65"/><rect x="12" y="21" width="1" height="1" fill="rgb(0, 0, 183)" opacity="0.68"/><rect x="13" y="21" width="1" height="1" fill="rgb(40, 223, 60)" opacity="0.62"/><rect x="14" y="21" width="1" height="1" fill="rgb(0, 241, 0)" opacity="0.64"/><rect x="15" y="21" width="1" height="1" fill="rgb(40, 246, 0)" opacity="0.62"/><rect x="16" y="21" width="1" height="1" fill="rgb(120, 231, 0)" opacity="0.64"/><rect x="17" y="21" width="1" height="1" fill="rgb(0, 184, 0)" opacity="0.63"/><rect x="18" y="21" width="1" height="1" fill="rgb(0, 0, 217)" opacity="0.51"/><rect x="19" y="21" width="1" height="1" fill="rgb(234, 43, 0)" opacity="0.42"/><rect x="20" y="21" width="1" height="1" fill="rgb(40, 210, 60)" opacity="0.27"/><rect x="21" y="21" width="1" height="1" fill="rgb(120, 237, 0)" opacity="0.19"/><rect x="22" y="21" width="1" height="1" fill="rgb(0, 183, 0)" opacity="0.16"/><rect x="4" y="22" width="1" height="1" fill="rgb(243, 53, 0)" opacity="0.14"/><rect x="5" y="22" width="1" height="1" fill="rgb(0, 245, 0)" opacity="0.17"/><rect x="6" y="22" width="1" height="1" fill="rgb(0, 0, 194)" opacity="0.20"/><rect x="7" y="22" width="1" height="1" fill="rgb(0, 0, 182)" opacity="0.46"/><rect x="8" y="22" width="1" height="1" fill="rgb(40, 224, 60)" opacity="0.44"/><rect x="9" y="22" width="1" height="1" fill="rgb(0, 182, 60)" opacity="0.61"/><rect x="10" y="22" width="1" height="1" fill="rgb(0, 212, 0)" opacity="0.50"/><rect x="11" y="22" width="1" height="1" fill="rgb(0, 0, 186)" opacity="0.60"/><rect x="12" y="22" width="1" height="1" fill="rgb(0, 0, 212)" opacity="0.51"/><rect x="13" y="22" width="1" height="1" fill="rgb(0, 240, 0)" opacity="0.61"/><rect x="14" y="22" width="1" height="1" fill="rgb(0, 0, 177)" opacity="0.59"/><rect x="15" y="22" width="1" height="1" fill="rgb(0, 0, 211)" opacity="0.55"/><rect x="16" y="22" width="1" height="1" fill="rgb(0, 179, 0)" opacity="0.52"/><rect x="17" y="22" width="1" height="1" fill="rgb(120, 218, 60)" opacity="0.54"/><rect x="18" y="22" width="1" height="1" fill="rgb(0, 179, 0)" opacity="0.47"/><rect x="19" y="22" width="1" height="1" fill="rgb(0, 184, 60)" opacity="0.22"/><rect x="20" y="22" width="1" height="1" fill="rgb(0, 241, 0)" opacity="0.17"/><rect x="21" y="22" width="1" height="1" fill="rgb(228, 53, 0)" opacity="0.16"/><rect x="5" y="23" width="1" height="1" fill="rgb(0, 0, 185)" opacity="0.13"/><rect x="6" y="23" width="1" height="1" fill="rgb(0, 0, 205)" opacity="0.20"/><rect x="7" y="23" width="1" height="1" fill="rgb(251, 31, 0)" opacity="0.21"/><rect x="8" y="23" width="1" height="1" fill="rgb(120, 235, 0)" opacity="0.24"/><rect x="9" y="23" width="1" height="1" fill="rgb(40, 244, 0)" opacity="0.38"/><rect x="10" y="23" width="1" height="1" fill="rgb(40, 253, 60)" opacity="0.48"/><rect x="11" y="23" width="1" height="1" fill="rgb(120, 219, 60)" opacity="0.47"/><rect x="12" y="23" width="1" height="1" fill="rgb(120, 231, 0)" opacity="0.44"/><rect x="13" y="23" width="1" height="1" fill="rgb(40, 250, 0)" opacity="0.53"/><rect x="14" y="23" width="1" height="1" fill="rgb(0, 202, 0)" opacity="0.47"/><rect x="15" y="23" width="1" height="1" fill="rgb(200, 225, 0)" opacity="0.47"/><rect x="16" y="23" width="1" height="1" fill="rgb(120, 237, 60)" opacity="0.44"/><rect x="17" y="23" width="1" height="1" fill="rgb(226, 43, 0)" opacity="0.23"/><rect x="18" y="23" width="1" height="1" fill="rgb(40, 174, 0)" opacity="0.21"/><rect x="19" y="23" width="1" height="1" fill="rgb(229, 28, 0)" opacity="0.20"/><rect x="20" y="23" width="1" height="1" fill="rgb(0, 208, 0)" opacity="0.15"/><rect x="7" y="24" width="1" height="1" fill="rgb(232, 55, 0)" opacity="0.15"/><rect x="8" y="24" width="1" height="1" fill="rgb(0, 185, 0)" opacity="0.18"/><rect x="9" y="24" width="1" height="1" fill="rgb(40, 217, 0)" opacity="0.18"/><rect x="10" y="24" width="1" height="1" fill="rgb(200, 207, 0)" opacity="0.19"/><rect x="11" y="24" width="1" height="1" fill="rgb(200, 192, 0)" opacity="0.24"/><rect x="12" y="24" width="1" height="1" fill="rgb(255, 8, 0)" opacity="0.22"/><rect x="13" y="24" width="1" height="1" fill="rgb(0, 0, 153)" opacity="0.22"/><rect x="14" y="24" width="1" height="1" fill="rgb(252, 9, 0)" opacity="0.25"/><rect x="15" y="24" width="1" height="1" fill="rgb(0, 0, 219)" opacity="0.24"/><rect x="16" y="24" width="1" height="1" fill="rgb(0, 239, 0)" opacity="0.19"/><rect x="17" y="24" width="1" height="1" fill="rgb(200, 216, 0)" opacity="0.18"/><rect x="18" y="24" width="1" height="1" fill="rgb(0, 214, 0)" opacity="0.15"/><rect x="9" y="25" width="1" height="1" fill="rgb(234, 4, 0)" opacity="0.15"/><rect x="10" y="25" width="1" height="1" fill="rgb(0, 0, 159)" opacity="0.14"/><rect x="11" y="25" width="1" height="1" fill="rgb(0, 0, 165)" opacity="0.15"/><rect x="12" y="25" width="1" height="1" fill="rgb(242, 55, 0)" opacity="0.15"/><rect x="13" y="25" width="1" height="1" fill="rgb(0, 255, 0)" opacity="0.14"/><rect x="14" y="25" width="1" height="1" fill="rgb(200, 236, 0)" opacity="0.16"/><rect x="15" y="25" width="1" height="1" fill="rgb(200, 181, 0)" opacity="0.15"/><rect x="16" y="25" width="1" height="1" fill="rgb(120, 183, 0)" opacity="0.13"/></svg>
<div class="t" style="left:752px;top:113.84px;font-size:12px;color:#000;transform:scaleX(0.85);transform-origin:0 0">Cursor (X)</div>
<div class="t" style="left:863px;top:116.84px;font-size:12px;color:#000;transform:scaleX(0.88);transform-origin:0 0">51.861 µm</div>
<div class="r" style="left:752px;top:133px;width:176px;height:1px;background:#b0b0b0;"></div>
<div class="t" style="left:752px;top:134.84px;font-size:12px;color:#000;transform:scaleX(0.85);transform-origin:0 0">Cursor (Y)</div>
<div class="t" style="left:863px;top:137.84px;font-size:12px;color:#000;transform:scaleX(0.88);transform-origin:0 0">42.422 µm</div>
<div class="r" style="left:752px;top:154px;width:176px;height:1px;background:#b0b0b0;"></div>
<div class="t" style="left:752px;top:155.84px;font-size:12px;color:#000;transform:scaleX(0.85);transform-origin:0 0">Intensity</div>
<div class="t" style="left:890px;top:158.84px;font-size:12px;color:#000;transform:scaleX(0.88);transform-origin:0 0">6 Count</div>
<div class="r" style="left:752px;top:175px;width:176px;height:1px;background:#b0b0b0;"></div>
<div class="t" style="left:752px;top:176.84px;font-size:12px;color:#000;transform:scaleX(0.85);transform-origin:0 0">Aver. Lifet.</div>
<div class="t" style="left:863px;top:179.84px;font-size:12px;color:#000;transform:scaleX(0.88);transform-origin:0 0">11.648 ns</div>
<div class="r" style="left:752px;top:196px;width:176px;height:1px;background:#b0b0b0;"></div>
<div class="t" style="left:752px;top:197.84px;font-size:12px;color:#000;transform:scaleX(0.85);transform-origin:0 0">Lifet. 1</div>
<div class="t" style="left:888px;top:200.84px;font-size:12px;color:#000;transform:scaleX(0.88);transform-origin:0 0">---</div>
<div class="r" style="left:752px;top:217px;width:176px;height:1px;background:#b0b0b0;"></div>
<div class="t" style="left:752px;top:218.84px;font-size:12px;color:#000;transform:scaleX(0.85);transform-origin:0 0">Ampl. 1</div>
<div class="t" style="left:888px;top:221.84px;font-size:12px;color:#000;transform:scaleX(0.88);transform-origin:0 0">---</div>
<div class="r" style="left:752px;top:238px;width:176px;height:1px;background:#b0b0b0;"></div>
<div class="t" style="left:752px;top:239.84px;font-size:12px;color:#000;transform:scaleX(0.85);transform-origin:0 0">Lifet. 2</div>
<div class="t" style="left:888px;top:242.84px;font-size:12px;color:#000;transform:scaleX(0.88);transform-origin:0 0">---</div>
<div class="r" style="left:752px;top:259px;width:176px;height:1px;background:#b0b0b0;"></div>
<div class="t" style="left:752px;top:260.84px;font-size:12px;color:#000;transform:scaleX(0.85);transform-origin:0 0">Ampl. 2</div>
<div class="t" style="left:888px;top:263.84px;font-size:12px;color:#000;transform:scaleX(0.88);transform-origin:0 0">---</div>
<div class="r" style="left:752px;top:280px;width:176px;height:1px;background:#b0b0b0;"></div>
<div class="t" style="left:752px;top:281.84px;font-size:12px;color:#000;transform:scaleX(0.85);transform-origin:0 0">Lifet. 3</div>
<div class="t" style="left:888px;top:284.84px;font-size:12px;color:#000;transform:scaleX(0.88);transform-origin:0 0">---</div>
<div class="r" style="left:752px;top:301px;width:176px;height:1px;background:#b0b0b0;"></div>
<div class="t" style="left:752px;top:302.84px;font-size:12px;color:#000;transform:scaleX(0.85);transform-origin:0 0">Ampl. 3</div>
<div class="t" style="left:888px;top:305.84px;font-size:12px;color:#000;transform:scaleX(0.88);transform-origin:0 0">---</div>
<div class="r" style="left:752px;top:322px;width:176px;height:1px;background:#b0b0b0;"></div>
<div class="t" style="left:752px;top:323.84px;font-size:12px;color:#000;transform:scaleX(0.85);transform-origin:0 0">Lifet. 4</div>
<div class="t" style="left:888px;top:326.84px;font-size:12px;color:#000;transform:scaleX(0.88);transform-origin:0 0">---</div>
<div class="r" style="left:752px;top:343px;width:176px;height:1px;background:#b0b0b0;"></div>
<div class="t" style="left:752px;top:344.84px;font-size:12px;color:#000;transform:scaleX(0.85);transform-origin:0 0">Ampl. 4</div>
<div class="t" style="left:888px;top:347.84px;font-size:12px;color:#000;transform:scaleX(0.88);transform-origin:0 0">---</div>
<div class="r" style="left:752px;top:364px;width:176px;height:1px;background:#b0b0b0;"></div>
<div class="t" style="left:752px;top:365.84px;font-size:12px;color:#000;transform:scaleX(0.85);transform-origin:0 0">Backgr.</div>
<div class="t" style="left:888px;top:368.84px;font-size:12px;color:#000;transform:scaleX(0.88);transform-origin:0 0">---</div>
<div class="r" style="left:752px;top:385px;width:176px;height:1px;background:#b0b0b0;"></div>
<div class="r" style="left:832px;top:113px;width:1px;height:272px;background:#b0b0b0;"></div>
<svg class="r" style="left:7px;top:691px;" width="17" height="16" viewBox="0 0 17 16"><path d="M1.5 13.5 L3.5 11 L4.5 4 L5.5 2 L8 4.5" stroke="#0000ff" fill="none" stroke-width="1.4"/><rect x="8" y="1" width="8" height="9" fill="#fff"/><path d="M15 2.5 H9.5 L12.5 5.5 L9.5 8.5 H15" stroke="#000" fill="none" stroke-width="1.3"/><path d="M11 10.5 L14 12 L15 14" stroke="#0000ff" stroke-width="1.8" fill="none"/></svg>
<div class="r" style="left:26px;top:688px;width:20px;height:20px;background:#f8f8f8;"></div>
<div class="r" style="left:26px;top:688px;width:20px;height:1px;background:#a0a0a0;"></div>
<div class="r" style="left:26px;top:688px;width:1px;height:20px;background:#a0a0a0;"></div>
<div class="r" style="left:26px;top:707px;width:20px;height:1px;background:#fff;"></div>
<div class="r" style="left:45px;top:688px;width:1px;height:20px;background:#fff;"></div>
<svg class="r" style="left:29px;top:692px;" width="17" height="16" viewBox="0 0 17 16"><path d="M1.5 1 V4.5 H6.5 V2.5 H4.5 M1.5 6.5 H6.5 V9.5 H1.5 Z M1 12.5 H6.5 M6.5 11 V14" stroke="#000" fill="none" stroke-width="1.2"/><path d="M8.5 0.5 V14.5 M8 1.5 H16 M8 13.5 H16" stroke="#000"/><path d="M10.5 14 V15.5 M12.5 14 V15.5 M14.5 14 V15.5" stroke="#000"/><path d="M9.5 9 L11.5 3.5 L13.5 8 L15.5 5" stroke="#0000ff" fill="none" stroke-width="1.3"/><path d="M9.5 12 L11.5 8.5 L13.5 11 L15.5 6.5" stroke="#ff0000" fill="none" stroke-width="1.3"/></svg>
<div class="t" style="left:52px;top:692.84px;font-size:12px;color:#000;transform:scaleX(0.88);transform-origin:0 0">Fit: Chn.</div>
<div class="r" style="left:91px;top:688px;width:52px;height:21px;background:#fff;"></div>
<div class="r" style="left:91px;top:688px;width:51px;height:1px;background:#a0a0a0;"></div>
<div class="r" style="left:91px;top:688px;width:1px;height:20px;background:#a0a0a0;"></div>
<div class="r" style="left:91px;top:708px;width:52px;height:1px;background:#fff;"></div>
<div class="r" style="left:142px;top:688px;width:1px;height:21px;background:#fff;"></div>
<div class="r" style="left:92px;top:689px;width:49px;height:1px;background:#696969;"></div>
<div class="r" style="left:92px;top:689px;width:1px;height:18px;background:#696969;"></div>
<div class="r" style="left:92px;top:707px;width:50px;height:1px;background:#e3e3e3;"></div>
<div class="r" style="left:141px;top:689px;width:1px;height:19px;background:#e3e3e3;"></div>
<div class="r" style="left:126px;top:690px;width:15px;height:8px;background:#f0f0f0;"></div>
<div class="r" style="left:126px;top:690px;width:14px;height:1px;background:#fff;"></div>
<div class="r" style="left:126px;top:690px;width:1px;height:7px;background:#fff;"></div>
<div class="r" style="left:126px;top:697px;width:15px;height:1px;background:#696969;"></div>
<div class="r" style="left:140px;top:690px;width:1px;height:8px;background:#696969;"></div>
<div class="r" style="left:127px;top:691px;width:12px;height:1px;background:#e3e3e3;"></div>
<div class="r" style="left:127px;top:691px;width:1px;height:5px;background:#e3e3e3;"></div>
<div class="r" style="left:127px;top:696px;width:13px;height:1px;background:#a0a0a0;"></div>
<div class="r" style="left:139px;top:691px;width:1px;height:6px;background:#a0a0a0;"></div>
<div class="r" style="left:126px;top:698px;width:15px;height:9px;background:#f0f0f0;"></div>
<div class="r" style="left:126px;top:698px;width:14px;height:1px;background:#fff;"></div>
<div class="r" style="left:126px;top:698px;width:1px;height:8px;background:#fff;"></div>
<div class="r" style="left:126px;top:706px;width:15px;height:1px;background:#696969;"></div>
<div class="r" style="left:140px;top:698px;width:1px;height:9px;background:#696969;"></div>
<div class="r" style="left:127px;top:699px;width:12px;height:1px;background:#e3e3e3;"></div>
<div class="r" style="left:127px;top:699px;width:1px;height:6px;background:#e3e3e3;"></div>
<div class="r" style="left:127px;top:705px;width:13px;height:1px;background:#a0a0a0;"></div>
<div class="r" style="left:139px;top:699px;width:1px;height:7px;background:#a0a0a0;"></div>
<div class="r" style="left:133px;top:693px;width:1px;height:1px;background:#000;"></div>
<div class="r" style="left:132px;top:694px;width:3px;height:1px;background:#000;"></div>
<div class="r" style="left:131px;top:695px;width:5px;height:1px;background:#000;"></div>
<div class="r" style="left:130px;top:696px;width:7px;height:1px;background:#000;"></div>
<div class="r" style="left:130px;top:701px;width:7px;height:1px;background:#000;"></div>
<div class="r" style="left:131px;top:702px;width:5px;height:1px;background:#000;"></div>
<div class="r" style="left:132px;top:703px;width:3px;height:1px;background:#000;"></div>
<div class="r" style="left:133px;top:704px;width:1px;height:1px;background:#000;"></div>
<div class="t" style="left:95px;top:691.84px;font-size:12px;color:#000;transform:scaleX(0.88);transform-origin:0 0">182</div>
<div class="t" style="left:147px;top:692.84px;font-size:12px;color:#000;transform:scaleX(0.88);transform-origin:0 0">to</div>
<div class="r" style="left:157px;top:688px;width:52px;height:21px;background:#fff;"></div>
<div class="r" style="left:157px;top:688px;width:51px;height:1px;background:#a0a0a0;"></div>
<div class="r" style="left:157px;top:688px;width:1px;height:20px;background:#a0a0a0;"></div>
<div class="r" style="left:157px;top:708px;width:52px;height:1px;background:#fff;"></div>
<div class="r" style="left:208px;top:688px;width:1px;height:21px;background:#fff;"></div>
<div class="r" style="left:158px;top:689px;width:49px;height:1px;background:#696969;"></div>
<div class="r" style="left:158px;top:689px;width:1px;height:18px;background:#696969;"></div>
<div class="r" style="left:158px;top:707px;width:50px;height:1px;background:#e3e3e3;"></div>
<div class="r" style="left:207px;top:689px;width:1px;height:19px;background:#e3e3e3;"></div>
<div class="r" style="left:192px;top:690px;width:15px;height:8px;background:#f0f0f0;"></div>
<div class="r" style="left:192px;top:690px;width:14px;height:1px;background:#fff;"></div>
<div class="r" style="left:192px;top:690px;width:1px;height:7px;background:#fff;"></div>
<div class="r" style="left:192px;top:697px;width:15px;height:1px;background:#696969;"></div>
<div class="r" style="left:206px;top:690px;width:1px;height:8px;background:#696969;"></div>
<div class="r" style="left:193px;top:691px;width:12px;height:1px;background:#e3e3e3;"></div>
<div class="r" style="left:193px;top:691px;width:1px;height:5px;background:#e3e3e3;"></div>
<div class="r" style="left:193px;top:696px;width:13px;height:1px;background:#a0a0a0;"></div>
<div class="r" style="left:205px;top:691px;width:1px;height:6px;background:#a0a0a0;"></div>
<div class="r" style="left:192px;top:698px;width:15px;height:9px;background:#f0f0f0;"></div>
<div class="r" style="left:192px;top:698px;width:14px;height:1px;background:#fff;"></div>
<div class="r" style="left:192px;top:698px;width:1px;height:8px;background:#fff;"></div>
<div class="r" style="left:192px;top:706px;width:15px;height:1px;background:#696969;"></div>
<div class="r" style="left:206px;top:698px;width:1px;height:9px;background:#696969;"></div>
<div class="r" style="left:193px;top:699px;width:12px;height:1px;background:#e3e3e3;"></div>
<div class="r" style="left:193px;top:699px;width:1px;height:6px;background:#e3e3e3;"></div>
<div class="r" style="left:193px;top:705px;width:13px;height:1px;background:#a0a0a0;"></div>
<div class="r" style="left:205px;top:699px;width:1px;height:7px;background:#a0a0a0;"></div>
<div class="r" style="left:199px;top:693px;width:1px;height:1px;background:#000;"></div>
<div class="r" style="left:198px;top:694px;width:3px;height:1px;background:#000;"></div>
<div class="r" style="left:197px;top:695px;width:5px;height:1px;background:#000;"></div>
<div class="r" style="left:196px;top:696px;width:7px;height:1px;background:#000;"></div>
<div class="r" style="left:196px;top:701px;width:7px;height:1px;background:#000;"></div>
<div class="r" style="left:197px;top:702px;width:5px;height:1px;background:#000;"></div>
<div class="r" style="left:198px;top:703px;width:3px;height:1px;background:#000;"></div>
<div class="r" style="left:199px;top:704px;width:1px;height:1px;background:#000;"></div>
<div class="t" style="left:161px;top:691.84px;font-size:12px;color:#000;transform:scaleX(0.88);transform-origin:0 0">1838</div>
<svg class="r" style="left:216px;top:691px;" width="14" height="15" viewBox="0 0 14 15"><path d="M0.5 1 V14 M13.5 1 V14" stroke="#0020ff"/><path d="M2 7.5 H12" stroke="#0020ff"/><path d="M2 7.5 L5 5 V10 Z M12 7.5 L9 5 V10 Z" fill="#0020ff"/></svg>
<svg class="r" style="left:246px;top:690px;" width="16" height="16" viewBox="0 0 16 16"><text x="0" y="7" font-family="Liberation Sans" font-size="8.5" font-weight="bold" fill="#e00000" textLength="15" lengthAdjust="spacingAndGlyphs">IRF</text><path d="M3 12 H15 M3 14 H15" stroke="#00b000" stroke-width="1.2"/><path d="M1 13 L5 9.5 V16.5 Z" fill="#00b000"/></svg>
<svg class="r" style="left:266px;top:690px;" width="16" height="16" viewBox="0 0 16 16"><text x="0" y="7" font-family="Liberation Sans" font-size="8.5" font-weight="bold" fill="#e00000" textLength="15" lengthAdjust="spacingAndGlyphs">IRF</text><path d="M3 12.5 H7" stroke="#00b000" stroke-width="2"/><path d="M1 12.5 L4 10 V15 Z" fill="#00b000"/><text x="6" y="15" font-family="Liberation Sans" font-size="5.5" font-weight="bold" fill="#000">ASC</text></svg>
<svg class="r" style="left:286px;top:690px;" width="16" height="16" viewBox="0 0 16 16"><text x="0" y="7" font-family="Liberation Sans" font-size="8.5" font-weight="bold" fill="#e00000" textLength="15" lengthAdjust="spacingAndGlyphs">IRF</text><path d="M3 11 L6 15 L13 7" stroke="#00b000" stroke-width="2.3" fill="none"/></svg>
<svg class="r" style="left:307px;top:691px;" width="16" height="16" viewBox="0 0 16 16"><circle cx="8" cy="8" r="7" fill="#e00000"/><circle cx="8" cy="8" r="4.5" fill="#000"/><text x="3" y="10.5" font-family="Liberation Sans" font-size="6.5" font-weight="bold" fill="#fff">IRF</text><path d="M3 13 L13 3" stroke="#e00000" stroke-width="2"/></svg>
<svg class="r" style="left:336px;top:690px;" width="17" height="17" viewBox="0 0 17 17"><path d="M2 15 L8 9" stroke="#000" stroke-width="3.5"/><path d="M5 3 A3 3 0 1 0 9 7 L15 13" stroke="#000" stroke-width="2" fill="none"/><path d="M8 9 L15 2" stroke="#e00000" stroke-width="4"/><circle cx="13" cy="14" r="2.2" stroke="#000" stroke-width="1.5" fill="none"/></svg>
<svg class="r" style="left:357px;top:690px;" width="16" height="16" viewBox="0 0 16 16"><text x="0" y="8" font-family="Liberation Sans" font-size="9" font-weight="bold" fill="#e00000" textLength="15" lengthAdjust="spacingAndGlyphs">FIT</text><path d="M1 12.5 H3 M5 12.5 H7 M9 12.5 H13" stroke="#000" stroke-width="2"/><path d="M12 10 L15 12.5 L12 15" stroke="#000" fill="none"/></svg>
<svg class="r" style="left:386px;top:690px;" width="17" height="16" viewBox="0 0 17 16"><rect x="0.5" y="1.5" width="9" height="12" fill="#fff" stroke="#000"/><path d="M3 4 H4 M3 7 H4 M3 10 H4 M6 4 H7 M6 7 H7" stroke="#000"/><path d="M6 8 H11 V5 L16 10 L11 15 V12 H6 Z" fill="#e00000" stroke="#600" stroke-width="0.6"/></svg>
<div class="r" style="left:3px;top:711px;width:712px;height:311px;background:#fff;"></div>
<div class="r" style="left:3px;top:711px;width:711px;height:1px;background:#a0a0a0;"></div>
<div class="r" style="left:3px;top:711px;width:1px;height:310px;background:#a0a0a0;"></div>
<div class="r" style="left:3px;top:1021px;width:712px;height:1px;background:#fff;"></div>
<div class="r" style="left:714px;top:711px;width:1px;height:311px;background:#fff;"></div>
<div class="r" style="left:4px;top:712px;width:709px;height:1px;background:#696969;"></div>
<div class="r" style="left:4px;top:712px;width:1px;height:308px;background:#696969;"></div>
<div class="r" style="left:4px;top:1020px;width:710px;height:1px;background:#e3e3e3;"></div>
<div class="r" style="left:713px;top:712px;width:1px;height:309px;background:#e3e3e3;"></div>
<svg class="r" style="left:0px;top:0px;pointer-events:none" width="934" height="1048" viewBox="0 0 934 1048"><rect x="82" y="724" width="1" height="142" fill="#e8e8e8"/><rect x="82" y="884" width="1" height="68" fill="#e8e8e8"/><rect x="95" y="724" width="1" height="142" fill="#e8e8e8"/><rect x="95" y="884" width="1" height="68" fill="#e8e8e8"/><rect x="107" y="724" width="1" height="142" fill="#e8e8e8"/><rect x="107" y="884" width="1" height="68" fill="#e8e8e8"/><rect x="120" y="724" width="1" height="142" fill="#e8e8e8"/><rect x="120" y="884" width="1" height="68" fill="#e8e8e8"/><rect x="145" y="724" width="1" height="142" fill="#e8e8e8"/><rect x="145" y="884" width="1" height="68" fill="#e8e8e8"/><rect x="158" y="724" width="1" height="142" fill="#e8e8e8"/><rect x="158" y="884" width="1" height="68" fill="#e8e8e8"/><rect x="171" y="724" width="1" height="142" fill="#e8e8e8"/><rect x="171" y="884" width="1" height="68" fill="#e8e8e8"/><rect x="183" y="724" width="1" height="142" fill="#e8e8e8"/><rect x="183" y="884" width="1" height="68" fill="#e8e8e8"/><rect x="209" y="724" width="1" height="142" fill="#e8e8e8"/><rect x="209" y="884" width="1" height="68" fill="#e8e8e8"/><rect x="221" y="724" width="1" height="142" fill="#e8e8e8"/><rect x="221" y="884" width="1" height="68" fill="#e8e8e8"/><rect x="234" y="724" width="1" height="142" fill="#e8e8e8"/><rect x="234" y="884" width="1" height="68" fill="#e8e8e8"/><rect x="247" y="724" width="1" height="142" fill="#e8e8e8"/><rect x="247" y="884" width="1" height="68" fill="#e8e8e8"/><rect x="272" y="724" width="1" height="142" fill="#e8e8e8"/><rect x="272" y="884" width="1" height="68" fill="#e8e8e8"/><rect x="285" y="724" width="1" height="142" fill="#e8e8e8"/><rect x="285" y="884" width="1" height="68" fill="#e8e8e8"/><rect x="297" y="724" width="1" height="142" fill="#e8e8e8"/><rect x="297" y="884" width="1" height="68" fill="#e8e8e8"/><rect x="310" y="724" width="1" height="142" fill="#e8e8e8"/><rect x="310" y="884" width="1" height="68" fill="#e8e8e8"/><rect x="335" y="724" width="1" height="142" fill="#e8e8e8"/><rect x="335" y="884" width="1" height="68" fill="#e8e8e8"/><rect x="348" y="724" width="1" height="142" fill="#e8e8e8"/><rect x="348" y="884" width="1" height="68" fill="#e8e8e8"/><rect x="361" y="724" width="1" height="142" fill="#e8e8e8"/><rect x="361" y="884" width="1" height="68" fill="#e8e8e8"/><rect x="373" y="724" width="1" height="142" fill="#e8e8e8"/><rect x="373" y="884" width="1" height="68" fill="#e8e8e8"/><rect x="399" y="724" width="1" height="142" fill="#e8e8e8"/><rect x="399" y="884" width="1" height="68" fill="#e8e8e8"/><rect x="411" y="724" width="1" height="142" fill="#e8e8e8"/><rect x="411" y="884" width="1" height="68" fill="#e8e8e8"/><rect x="424" y="724" width="1" height="142" fill="#e8e8e8"/><rect x="424" y="884" width="1" height="68" fill="#e8e8e8"/><rect x="437" y="724" width="1" height="142" fill="#e8e8e8"/><rect x="437" y="884" width="1" height="68" fill="#e8e8e8"/><rect x="462" y="724" width="1" height="142" fill="#e8e8e8"/><rect x="462" y="884" width="1" height="68" fill="#e8e8e8"/><rect x="475" y="724" width="1" height="142" fill="#e8e8e8"/><rect x="475" y="884" width="1" height="68" fill="#e8e8e8"/><rect x="487" y="724" width="1" height="142" fill="#e8e8e8"/><rect x="487" y="884" width="1" height="68" fill="#e8e8e8"/><rect x="500" y="724" width="1" height="142" fill="#e8e8e8"/><rect x="500" y="884" width="1" height="68" fill="#e8e8e8"/><rect x="525" y="724" width="1" height="142" fill="#e8e8e8"/><rect x="525" y="884" width="1" height="68" fill="#e8e8e8"/><rect x="538" y="724" width="1" height="142" fill="#e8e8e8"/><rect x="538" y="884" width="1" height="68" fill="#e8e8e8"/><rect x="551" y="724" width="1" height="142" fill="#e8e8e8"/><rect x="551" y="884" width="1" height="68" fill="#e8e8e8"/><rect x="563" y="724" width="1" height="142" fill="#e8e8e8"/><rect x="563" y="884" width="1" height="68" fill="#e8e8e8"/><rect x="589" y="724" width="1" height="142" fill="#e8e8e8"/><rect x="589" y="884" width="1" height="68" fill="#e8e8e8"/><rect x="601" y="724" width="1" height="142" fill="#e8e8e8"/><rect x="601" y="884" width="1" height="68" fill="#e8e8e8"/><rect x="614" y="724" width="1" height="142" fill="#e8e8e8"/><rect x="614" y="884" width="1" height="68" fill="#e8e8e8"/><rect x="627" y="724" width="1" height="142" fill="#e8e8e8"/><rect x="627" y="884" width="1" height="68" fill="#e8e8e8"/><rect x="652" y="724" width="1" height="142" fill="#e8e8e8"/><rect x="652" y="884" width="1" height="68" fill="#e8e8e8"/><rect x="665" y="724" width="1" height="142" fill="#e8e8e8"/><rect x="665" y="884" width="1" height="68" fill="#e8e8e8"/><rect x="677" y="724" width="1" height="142" fill="#e8e8e8"/><rect x="677" y="884" width="1" height="68" fill="#e8e8e8"/><rect x="690" y="724" width="1" height="142" fill="#e8e8e8"/><rect x="690" y="884" width="1" height="68" fill="#e8e8e8"/><rect x="70" y="833" width="632" height="1" fill="#e8e8e8"/><rect x="70" y="820" width="632" height="1" fill="#e8e8e8"/><rect x="70" y="811" width="632" height="1" fill="#e8e8e8"/><rect x="70" y="803" width="632" height="1" fill="#e8e8e8"/><rect x="70" y="798" width="632" height="1" fill="#e8e8e8"/><rect x="70" y="793" width="632" height="1" fill="#e8e8e8"/><rect x="70" y="788" width="632" height="1" fill="#e8e8e8"/><rect x="70" y="785" width="632" height="1" fill="#e8e8e8"/><rect x="70" y="759" width="632" height="1" fill="#e8e8e8"/><rect x="70" y="746" width="632" height="1" fill="#e8e8e8"/><rect x="70" y="737" width="632" height="1" fill="#e8e8e8"/><rect x="70" y="729" width="632" height="1" fill="#e8e8e8"/><rect x="70" y="724" width="632" height="1" fill="#e8e8e8"/><rect x="70" y="949" width="632" height="1" fill="#e8e8e8"/><rect x="70" y="946" width="632" height="1" fill="#e8e8e8"/><rect x="70" y="942" width="632" height="1" fill="#e8e8e8"/><rect x="70" y="939" width="632" height="1" fill="#e8e8e8"/><rect x="70" y="932" width="632" height="1" fill="#e8e8e8"/><rect x="70" y="928" width="632" height="1" fill="#e8e8e8"/><rect x="70" y="925" width="632" height="1" fill="#e8e8e8"/><rect x="70" y="921" width="632" height="1" fill="#e8e8e8"/><rect x="70" y="914" width="632" height="1" fill="#e8e8e8"/><rect x="70" y="911" width="632" height="1" fill="#e8e8e8"/><rect x="70" y="907" width="632" height="1" fill="#e8e8e8"/><rect x="70" y="904" width="632" height="1" fill="#e8e8e8"/><rect x="70" y="897" width="632" height="1" fill="#e8e8e8"/><rect x="70" y="893" width="632" height="1" fill="#e8e8e8"/><rect x="70" y="890" width="632" height="1" fill="#e8e8e8"/><rect x="70" y="886" width="632" height="1" fill="#e8e8e8"/><rect x="133" y="724" width="1" height="142" fill="#b8b8b8"/><rect x="133" y="884" width="1" height="68" fill="#b8b8b8"/><rect x="196" y="724" width="1" height="142" fill="#b8b8b8"/><rect x="196" y="884" width="1" height="68" fill="#b8b8b8"/><rect x="259" y="724" width="1" height="142" fill="#b8b8b8"/><rect x="259" y="884" width="1" height="68" fill="#b8b8b8"/><rect x="323" y="724" width="1" height="142" fill="#b8b8b8"/><rect x="323" y="884" width="1" height="68" fill="#b8b8b8"/><rect x="386" y="724" width="1" height="142" fill="#b8b8b8"/><rect x="386" y="884" width="1" height="68" fill="#b8b8b8"/><rect x="449" y="724" width="1" height="142" fill="#b8b8b8"/><rect x="449" y="884" width="1" height="68" fill="#b8b8b8"/><rect x="513" y="724" width="1" height="142" fill="#b8b8b8"/><rect x="513" y="884" width="1" height="68" fill="#b8b8b8"/><rect x="576" y="724" width="1" height="142" fill="#b8b8b8"/><rect x="576" y="884" width="1" height="68" fill="#b8b8b8"/><rect x="639" y="724" width="1" height="142" fill="#b8b8b8"/><rect x="639" y="884" width="1" height="68" fill="#b8b8b8"/><rect x="70" y="855" width="632" height="1" fill="#b8b8b8"/><rect x="70" y="781" width="632" height="1" fill="#b8b8b8"/><rect x="70" y="935" width="632" height="1" fill="#b8b8b8"/><rect x="70" y="918" width="632" height="1" fill="#b8b8b8"/><rect x="70" y="900" width="632" height="1" fill="#b8b8b8"/><path d="M70 855V866M71 855V866M72 855V866M73 819V866M74 866V867M75 832V866M76 855V866M77 832V866M78 832V866M79 855V866M80 855V866M81 832V866M82 832V866M83 855V866M84 855V866M85 855V866M86 832V866M87 832V866M88 855V866M89 855V866M90 855V866M91 855V866M92 855V866M93 866V867M94 855V866M95 781V866M96 758V804M97 731V759M98 723V741M99 723V733M100 723V739M101 723V741M102 723V733M103 725V736M104 728V737M105 723V746M106 727V744M107 727V745M108 726V752M109 730V747M110 732V743M111 735V754M112 732V743M113 729V749M114 732V744M115 738V751M116 739V754M117 734V749M118 738V759M119 733V746M120 737V747M121 730V749M122 735V751M123 745V755M124 743V756M125 740V756M126 742V754M127 740V758M128 740V755M129 744V756M130 741V761M131 748V759M132 749V758M133 738V758M134 745V758M135 740V761M136 751V771M137 740V765M138 745V765M139 751V767M140 749V763M141 753V767M142 745V761M143 750V776M144 750V761M145 746V769M146 750V776M147 750V776M148 748V769M149 751V773M150 751V773M151 755V769M152 746V776M153 751V765M154 754V765M155 746V769M156 744V773M157 744V767M158 764V779M159 755V776M160 753V773M161 751V773M162 764V773M163 749V793M164 755V776M165 757V779M166 766V782M167 762V785M168 762V785M169 758V776M170 768V789M171 762V782M172 762V793M173 760V793M174 770V798M175 762V785M176 766V793M177 766V793M178 754V785M179 762V782M180 766V804M181 768V804M182 772V785M183 762V785M184 766V789M185 770V793M186 768V793M187 768V793M188 768V789M189 762V779M190 766V798M191 770V804M192 768V782M193 762V804M194 762V793M195 768V793M196 768V793M197 758V789M198 772V789M199 778V804M200 772V820M201 768V793M202 775V793M203 775V833M204 778V804M205 770V820M206 770V798M207 768V793M208 781V811M209 784V811M210 784V804M211 778V804M212 772V833M213 781V804M214 781V804M215 775V833M216 772V798M217 772V820M218 778V804M219 772V804M220 775V811M221 781V811M222 772V811M223 772V833M224 772V811M225 781V820M226 788V820M227 770V856M228 784V856M229 784V811M230 784V811M231 778V804M232 778V811M233 781V798M234 775V833M235 775V833M236 781V833M237 784V833M238 784V820M239 781V820M240 784V820M241 778V833M242 788V820M243 784V856M244 784V833M245 784V856M246 803V820M247 788V811M248 792V856M249 792V820M250 788V856M251 803V866M252 792V811M253 810V833M254 788V820M255 803V833M256 792V833M257 797V833M258 797V820M259 784V811M260 784V866M261 797V833M262 784V856M263 803V856M264 797V856M265 784V820M266 797V866M267 792V866M268 797V866M269 781V856M270 810V833M271 784V833M272 784V866M273 803V866M274 803V866M275 797V866M276 792V833M277 792V856M278 803V856M279 803V856M280 803V820M281 797V856M282 788V856M283 803V856M284 819V856M285 810V856M286 810V856M287 819V856M288 792V856M289 792V856M290 803V856M291 803V866M292 810V866M293 797V866M294 797V833M295 810V833M296 797V833M297 803V856M298 792V833M299 832V866M300 810V856M301 810V866M302 810V866M303 803V866M304 803V856M305 803V856M306 819V833M307 797V866M308 797V856M309 810V866M310 797V833M311 797V833M312 810V866M313 819V866M314 810V856M315 810V856M316 819V856M317 819V866M318 810V866M319 803V856M320 819V866M321 810V866M322 797V856M323 810V856M324 803V856M325 803V866M326 819V866M327 819V866M328 803V866M329 810V866M330 832V866M331 832V856M332 810V866M333 803V866M334 803V866M335 819V856M336 810V856M337 819V866M338 819V856M339 819V866M340 819V866M341 832V866M342 819V866M343 819V866M344 819V866M345 819V856M346 819V866M347 819V866M348 819V866M349 810V866M350 819V866M351 819V856M352 832V866M353 832V866M354 832V866M355 832V856M356 819V856M357 819V856M358 810V866M359 832V866M360 803V856M361 832V866M362 832V866M363 819V866M364 832V866M365 855V866M366 855V866M367 819V866M368 819V856M369 819V866M370 810V866M371 810V866M372 819V866M373 819V866M374 855V866M375 819V866M376 855V866M377 832V866M378 832V866M379 819V866M380 832V866M381 832V866M382 832V866M383 819V866M384 832V866M385 832V866M386 819V866M387 855V866M388 819V866M389 855V866M390 832V866M391 832V866M392 819V866M393 832V866M394 819V866M395 819V866M396 832V866M397 832V866M398 819V866M399 832V866M400 819V866M401 832V866M402 832V856M403 832V866M404 819V866M405 832V866M406 866V867M407 819V866M408 855V866M409 855V866M410 855V866M411 803V866M412 803V866M413 855V866M414 832V866M415 832V866M416 855V866M417 832V866M418 832V856M419 832V866M420 855V866M421 832V866M422 832V866M423 832V866M424 866V867M425 855V866M426 819V866M427 819V866M428 832V866M429 832V866M430 832V866M431 866V867M432 819V866M433 819V866M434 832V866M435 855V866M436 866V867M437 832V866M438 832V866M439 855V866M440 832V866M441 855V866M442 855V866M443 819V866M444 832V866M445 855V866M446 832V866M447 832V866M448 832V866M449 832V866M450 855V866M451 803V866M452 855V866M453 832V866M454 855V866M455 855V866M456 855V866M457 855V866M458 832V866M459 832V866M460 866V867M461 866V867M462 866V867M463 866V867M464 832V866M465 832V866M466 832V866M467 855V866M468 855V866M469 832V866M470 832V866M471 855V866M472 855V866M473 832V866M474 855V866M475 832V866M476 819V866M477 855V866M478 819V866M479 832V866M480 855V866M481 832V866M482 819V866M483 819V866M484 855V866M485 855V866M486 832V866M487 832V866M488 855V866M489 832V866M490 855V866M491 855V866M492 832V866M493 832V866M494 819V866M495 832V866M496 832V866M497 832V866M498 832V866M499 832V866M500 855V866M501 855V866M502 832V866M503 832V866M504 819V866M505 819V866M506 855V866M507 832V866M508 832V866M509 855V866M510 832V866M511 832V866M512 855V866M513 855V866M514 855V866M515 855V866M516 855V866M517 855V866M518 832V866M519 832V866M520 855V866M521 855V866M522 866V867M523 866V867M524 866V867M525 832V866M526 866V867M527 855V866M528 832V866M529 855V866M530 832V866M531 855V866M532 855V866M533 855V866M534 819V866M535 855V866M536 832V866M537 855V866M538 832V866M539 832V866M540 832V866M541 832V866M542 855V866M543 832V866M544 855V866M545 855V866M546 855V866M547 855V866M548 855V866M549 832V866M550 855V866M551 855V866M552 819V866M553 832V866M554 832V866M555 855V866M556 855V866M557 832V866M558 855V866M559 855V866M560 832V866M561 855V866M562 855V866M563 855V866M564 855V866M565 855V866M566 819V866M567 855V866M568 855V866M569 855V866M570 832V866M571 832V866M572 832V866M573 832V866M574 832V866M575 832V866M576 855V866M577 855V866M578 832V866M579 832V866M580 855V866M581 832V866M582 832V866M583 855V866M584 855V866M585 855V866M586 855V866M587 855V866M588 855V866M589 832V866M590 832V866M591 855V866M592 832V866M593 855V866M594 855V866M595 832V866M596 855V866M597 855V866M598 855V866M599 855V866M600 832V866M601 819V866M602 855V866M603 855V866M604 855V866M605 855V866M606 832V866M607 855V866M608 855V866M609 855V866M610 832V866M611 832V866M612 832V866M613 832V866M614 855V866M615 855V866M616 855V866M617 855V866M618 855V866M619 832V866M620 832V866M621 855V866M622 855V866M623 855V866M624 855V866M625 855V866M626 855V866M627 855V866M628 832V866M629 855V866M630 832V866M631 855V866M632 832V866M633 866V867M634 832V866M635 832V866M636 832V866M637 832V866M638 855V866M639 855V866M640 855V866M641 855V866M642 866V867M643 855V866M644 855V866M645 855V866M646 855V866M647 855V866M648 855V866M649 866V867M650 832V866M651 832V866M652 832V866M653 832V866M654 855V866M655 855V866M656 819V866M657 855V866M658 855V866M659 832V866M660 832V866M661 855V866M662 855V866M663 832V866M664 855V866M665 832V866M666 855V866M667 855V866M668 832V866M669 855V866M670 855V866M671 832V866M672 855V866M673 855V866M674 866V867M675 832V866M676 855V866M677 832V866M678 855V866M679 855V866M680 855V866M681 855V866M682 855V866M683 855V866M684 855V866M685 855V866M686 832V866M687 866V867M688 819V866M689 819V866M690 866V867M691 810V866M692 832V866M693 855V866M694 855V866M695 855V866M696 855V866M697 855V866M698 855V866M699 855V866M700 855V866M701 855V866" stroke="#0000ff" stroke-width="1" transform="translate(0.5,0)" shape-rendering="crispEdges" fill="none"/><polyline points="106,740.54 107,741.04 108,741.54 109,742.05 110,742.55 111,743.05 112,743.55 113,744.05 114,744.56 115,745.06 116,745.56 117,746.06 118,746.56 119,747.06 120,747.56 121,748.06 122,748.56 123,749.06 124,749.57 125,750.07 126,750.56 127,751.06 128,751.56 129,752.06 130,752.56 131,753.06 132,753.56 133,754.06 134,754.56 135,755.05 136,755.55 137,756.05 138,756.55 139,757.04 140,757.54 141,758.04 142,758.53 143,759.03 144,759.53 145,760.02 146,760.52 147,761.01 148,761.51 149,762.00 150,762.50 151,762.99 152,763.49 153,763.98 154,764.47 155,764.97 156,765.46 157,765.95 158,766.44 159,766.94 160,767.43 161,767.92 162,768.41 163,768.90 164,769.39 165,769.88 166,770.37 167,770.86 168,771.35 169,771.84 170,772.33 171,772.82 172,773.30 173,773.79 174,774.28 175,774.77 176,775.25 177,775.74 178,776.22 179,776.71 180,777.19 181,777.68 182,778.16 183,778.65 184,779.13 185,779.61 186,780.09 187,780.58 188,781.06 189,781.54 190,782.02 191,782.50 192,782.98 193,783.46 194,783.94 195,784.42 196,784.89 197,785.37 198,785.85 199,786.32 200,786.80 201,787.27 202,787.75 203,788.22 204,788.70 205,789.17 206,789.64 207,790.11 208,790.58 209,791.06 210,791.53 211,791.99 212,792.46 213,792.93 214,793.40 215,793.87 216,794.33 217,794.80 218,795.26 219,795.73 220,796.19 221,796.65 222,797.12 223,797.58 224,798.04 225,798.50 226,798.96 227,799.41 228,799.87 229,800.33 230,800.79 231,801.24 232,801.70 233,802.15 234,802.60 235,803.05 236,803.51 237,803.96 238,804.41 239,804.85 240,805.30 241,805.75 242,806.20 243,806.64 244,807.09 245,807.53 246,807.97 247,808.41 248,808.85 249,809.29 250,809.73 251,810.17 252,810.60 253,811.04 254,811.47 255,811.91 256,812.34 257,812.77 258,813.20 259,813.63 260,814.06 261,814.49 262,814.91 263,815.34 264,815.76 265,816.18 266,816.60 267,817.02 268,817.44 269,817.86 270,818.28 271,818.69 272,819.10 273,819.52 274,819.93 275,820.34 276,820.75 277,821.15 278,821.56 279,821.96 280,822.37 281,822.77 282,823.17 283,823.57 284,823.97 285,824.36 286,824.76 287,825.15 288,825.55 289,825.94 290,826.32 291,826.71 292,827.10 293,827.48 294,827.87 295,828.25 296,828.63 297,829.01 298,829.38 299,829.76 300,830.13 301,830.51 302,830.88 303,831.24 304,831.61 305,831.98 306,832.34 307,832.70 308,833.06 309,833.42 310,833.78 311,834.14 312,834.49 313,834.84 314,835.19 315,835.54 316,835.89 317,836.23 318,836.58 319,836.92 320,837.26 321,837.59 322,837.93 323,838.26 324,838.60 325,838.93 326,839.26 327,839.58 328,839.91 329,840.23 330,840.55 331,840.87 332,841.19 333,841.50 334,841.82 335,842.13 336,842.44 337,842.74 338,843.05 339,843.35 340,843.66 341,843.96 342,844.25 343,844.55 344,844.84 345,845.13 346,845.42 347,845.71 348,846.00 349,846.28 350,846.56 351,846.84 352,847.12 353,847.40 354,847.67 355,847.94 356,848.21 357,848.48 358,848.74 359,849.01 360,849.27 361,849.53 362,849.79 363,850.04 364,850.29 365,850.55 366,850.80 367,851.04 368,851.29 369,851.53 370,851.77 371,852.01 372,852.25 373,852.48 374,852.72 375,852.95 376,853.18 377,853.40 378,853.63 379,853.85 380,854.07 381,854.29 382,854.51 383,854.72 384,854.94 385,855.15 386,855.36 387,855.56 388,855.77 389,855.97 390,856.17 391,856.37 392,856.57 393,856.77 394,856.96 395,857.15 396,857.34 397,857.53 398,857.72 399,857.90 400,858.08 401,858.26 402,858.44 403,858.62 404,858.79 405,858.97 406,859.14 407,859.31 408,859.47 409,859.64 410,859.80 411,859.97 412,860.13 413,860.28 414,860.44 415,860.60 416,860.75 417,860.90 418,861.05 419,861.20 420,861.35 421,861.49 422,861.64 423,861.78 424,861.92 425,862.06 426,862.20 427,862.33 428,862.46 429,862.60 430,862.73 431,862.86 432,862.98 433,863.11 434,863.24 435,863.36 436,863.48 437,863.60 438,863.72 439,863.84 440,863.95 441,864.07 442,864.18" stroke="#000" stroke-width="2.2" fill="none"/><rect x="105" y="724" width="2" height="142" fill="#ff00ff"/><rect x="441" y="724" width="2" height="142" fill="#ff00ff"/><path d="M106 900V921M107 897V929M108 897V925M109 905V922M110 906V923M111 907V917M112 910V925M113 911V931M114 904V932M115 901V918M116 904V918M117 906V918M118 901V931M119 905V922M120 902V935M121 903V928M122 903V935M123 908V935M124 903V928M125 903V921M126 908V922M127 908V936M128 903V935M129 908V929M130 909V929M131 901V928M132 908V929M133 906V929M134 906V928M135 912V922M136 913V931M137 908V928M138 897V916M139 902V925M140 912V922M141 907V935M142 904V927M143 912V926M144 909V919M145 898V919M146 898V928M147 913V928M148 904V919M149 911V927M150 901V924M151 904V933M152 907V921M153 906V922M154 907V931M155 899V928M156 906V925M157 906V927M158 910V927M159 905V919M160 901V917M161 909V920M162 915V936M163 908V926M164 911V923M165 907V923M166 904V920M167 904V921M168 906V921M169 904V923M170 908V920M171 911V938M172 897V938M173 906V921M174 908V937M175 903V923M176 903V931M177 903V922M178 903V930M179 904V933M180 908V933M181 901V943M182 911V920M183 906V928M184 904V924M185 907V924M186 906V923M187 906V929M188 909V929M189 904V933M190 912V922M191 905V924M192 913V924M193 899V931M194 907V918M195 906V918M196 904V919M197 910V925M198 906V912M199 906V924M200 907V928M201 906V921M202 903V913M203 905V920M204 907V917M205 908V930M206 902V935M207 902V921M208 906V925M209 905V918M210 901V924M211 910V933M212 906V933M213 908V920M214 908V927M215 909V922M216 907V919M217 907V918M218 910V930M219 907V930M220 904V925M221 906V915M222 910V924M223 908V923M224 907V928M225 913V923M226 904V923M227 905V919M228 907V927M229 902V933M230 905V918M231 906V921M232 908V915M233 908V944M234 907V931M235 907V931M236 904V920M237 907V924M238 913V930M239 909V924M240 910V923M241 908V923M242 910V940M243 910V922M244 910V928M245 903V928M246 906V922M247 907V922M248 911V918M249 904V917M250 905V917M251 913V921M252 908V942M253 910V935M254 910V935M255 903V925M256 902V934M257 912V934M258 910V933M259 908V933M260 906V924M261 909V923M262 907V932M263 909V923M264 907V918M265 904V918M266 905V918M267 911V918M268 913V937M269 905V937M270 910V930M271 910V936M272 910V929M273 913V921M274 908V917M275 908V935M276 910V928M277 912V920M278 908V934M279 899V934M280 912V920M281 909V916M282 905V927M283 905V933M284 909V933M285 907V926M286 907V926M287 909V932M288 911V926M289 911V925M290 908V931M291 908V931M292 905V925M293 910V931M294 908V925M295 906V918M296 906V924M297 906V924M298 908V930M299 908V930M300 908V929M301 910V929M302 908V929M303 910V929M304 910V923M305 912V929M306 912V923M307 909V922M308 912V928M309 907V928M310 907V922M311 907V922M312 911V928M313 911V916M314 911V927M315 909V916M316 911V921M317 911V921M318 909V927M319 909V915M320 914V921M321 911V921M322 911V921M323 914V926M324 914V920M325 914V926M326 914V926M327 911V926M328 914V926M329 910V926M330 913V920M331 910V925M332 913V925M333 910V919M334 910V925M335 910V919M336 908V925M337 910V925M338 910V925M339 908V925M340 913V925M341 913V919M342 908V919M343 913V924M344 907V924M345 910V918M346 912V918M347 910V924M348 907V924M349 917V924M350 912V918M351 909V918M352 912V924M353 912V918M354 909V924M355 909V924M356 917V923M357 912V923M358 907V923M359 909V923M360 909V923M361 912V923M362 912V923M363 912V923M364 912V923M365 909V923M366 907V923M367 907V923M368 912V923M369 911V923M370 911V923M371 911V923M372 911V922M373 911V922M374 911V922M375 916V922M376 911V922M377 909V922M378 911V922M379 907V922M380 909V922M381 909V922M382 911V916M383 911V922M384 908V922M385 908V916M386 911V922M387 908V922M388 915V922M389 911V922M390 908V922M391 908V922M392 908V916M393 915V922M394 908V922M395 908V922M396 911V921M397 915V921M398 911V921M399 911V921M400 911V921M401 906V921M402 908V921M403 911V921M404 911V921M405 911V921M406 911V921M407 914V921M408 910V921M409 914V921M410 908V921M411 910V921M412 914V921M413 914V921M414 910V921M415 910V921M416 910V921M417 910V921M418 910V921M419 910V921M420 906V921M421 910V921M422 908V921M423 910V921M424 914V921M425 914V921M426 910V921M427 910V921M428 914V921M429 906V921M430 914V921M431 914V921M432 914V921M433 914V920M434 910V920M435 914V920M436 910V920M437 914V920M438 910V920M439 914V920M440 910V920M441 908V920" stroke="#0000ff" stroke-width="1" transform="translate(0.5,0)" shape-rendering="crispEdges" fill="none"/><rect x="69.5" y="723.5" width="633" height="143" fill="none" stroke="#000" shape-rendering="crispEdges"/><rect x="69.5" y="883.5" width="633" height="69" fill="none" stroke="#000" shape-rendering="crispEdges"/><rect x="133" y="862" width="1" height="4" fill="#000"/><rect x="133" y="948" width="1" height="4" fill="#000"/><rect x="196" y="862" width="1" height="4" fill="#000"/><rect x="196" y="948" width="1" height="4" fill="#000"/><rect x="259" y="862" width="1" height="4" fill="#000"/><rect x="259" y="948" width="1" height="4" fill="#000"/><rect x="323" y="862" width="1" height="4" fill="#000"/><rect x="323" y="948" width="1" height="4" fill="#000"/><rect x="386" y="862" width="1" height="4" fill="#000"/><rect x="386" y="948" width="1" height="4" fill="#000"/><rect x="449" y="862" width="1" height="4" fill="#000"/><rect x="449" y="948" width="1" height="4" fill="#000"/><rect x="513" y="862" width="1" height="4" fill="#000"/><rect x="513" y="948" width="1" height="4" fill="#000"/><rect x="576" y="862" width="1" height="4" fill="#000"/><rect x="576" y="948" width="1" height="4" fill="#000"/><rect x="639" y="862" width="1" height="4" fill="#000"/><rect x="639" y="948" width="1" height="4" fill="#000"/><rect x="70" y="855" width="4" height="1" fill="#000"/><rect x="70" y="781" width="4" height="1" fill="#000"/><rect x="70" y="935" width="4" height="1" fill="#000"/><rect x="70" y="918" width="4" height="1" fill="#000"/><rect x="70" y="900" width="4" height="1" fill="#000"/></svg>
<div class="t" style="left:112.8px;width:40px;text-align:center;top:957.00px;font-size:13px">10</div>
<div class="t" style="left:176.1px;width:40px;text-align:center;top:957.00px;font-size:13px">20</div>
<div class="t" style="left:239.4px;width:40px;text-align:center;top:957.00px;font-size:13px">30</div>
<div class="t" style="left:302.7px;width:40px;text-align:center;top:957.00px;font-size:13px">40</div>
<div class="t" style="left:366.0px;width:40px;text-align:center;top:957.00px;font-size:13px">50</div>
<div class="t" style="left:429.3px;width:40px;text-align:center;top:957.00px;font-size:13px">60</div>
<div class="t" style="left:492.6px;width:40px;text-align:center;top:957.00px;font-size:13px">70</div>
<div class="t" style="left:555.9px;width:40px;text-align:center;top:957.00px;font-size:13px">80</div>
<div class="t" style="left:619.2px;width:40px;text-align:center;top:957.00px;font-size:13px">90</div>
<div class="t" style="left:345px;width:80px;text-align:center;top:975.57px;font-size:13.5px">Time [ns]</div>
<div class="t" style="left:45px;top:774.00px;font-size:13px;color:#000;">10</div>
<div class="t" style="left:59px;top:771.38px;font-size:9px;color:#000;">1</div>
<div class="t" style="left:45px;top:848.00px;font-size:13px;color:#000;">10</div>
<div class="t" style="left:59px;top:845.38px;font-size:9px;color:#000;">0</div>
<div class="t" style="left:20px;width:46px;text-align:right;top:894.20px;font-size:13px">2.5</div>
<div class="t" style="left:20px;width:46px;text-align:right;top:911.70px;font-size:13px">0.0</div>
<div class="t" style="left:20px;width:46px;text-align:right;top:929.20px;font-size:13px">-2.5</div>
<div class="t" style="left:20px;top:800px;font-size:12.5px;transform:translate(-50%,-50%) rotate(-90deg);transform-origin:50% 50%">Amplitude [Counts]</div>
<div class="t" style="left:20px;top:918px;font-size:13px;transform:translate(-50%,-50%) rotate(-90deg);transform-origin:50% 50%">Resids.</div>
<div class="t" style="left:723px;top:695.84px;font-size:12px;color:#000;transform:scaleX(0.88);transform-origin:0 0">Exp.:</div>
<div class="r" style="left:752px;top:691px;width:33px;height:21px;background:#fff;"></div>
<div class="r" style="left:752px;top:691px;width:32px;height:1px;background:#a0a0a0;"></div>
<div class="r" style="left:752px;top:691px;width:1px;height:20px;background:#a0a0a0;"></div>
<div class="r" style="left:752px;top:711px;width:33px;height:1px;background:#fff;"></div>
<div class="r" style="left:784px;top:691px;width:1px;height:21px;background:#fff;"></div>
<div class="r" style="left:753px;top:692px;width:30px;height:1px;background:#696969;"></div>
<div class="r" style="left:753px;top:692px;width:1px;height:18px;background:#696969;"></div>
<div class="r" style="left:753px;top:710px;width:31px;height:1px;background:#e3e3e3;"></div>
<div class="r" style="left:783px;top:692px;width:1px;height:19px;background:#e3e3e3;"></div>
<div class="r" style="left:768px;top:693px;width:15px;height:8px;background:#f0f0f0;"></div>
<div class="r" style="left:768px;top:693px;width:14px;height:1px;background:#fff;"></div>
<div class="r" style="left:768px;top:693px;width:1px;height:7px;background:#fff;"></div>
<div class="r" style="left:768px;top:700px;width:15px;height:1px;background:#696969;"></div>
<div class="r" style="left:782px;top:693px;width:1px;height:8px;background:#696969;"></div>
<div class="r" style="left:769px;top:694px;width:12px;height:1px;background:#e3e3e3;"></div>
<div class="r" style="left:769px;top:694px;width:1px;height:5px;background:#e3e3e3;"></div>
<div class="r" style="left:769px;top:699px;width:13px;height:1px;background:#a0a0a0;"></div>
<div class="r" style="left:781px;top:694px;width:1px;height:6px;background:#a0a0a0;"></div>
<div class="r" style="left:768px;top:701px;width:15px;height:9px;background:#f0f0f0;"></div>
<div class="r" style="left:768px;top:701px;width:14px;height:1px;background:#fff;"></div>
<div class="r" style="left:768px;top:701px;width:1px;height:8px;background:#fff;"></div>
<div class="r" style="left:768px;top:709px;width:15px;height:1px;background:#696969;"></div>
<div class="r" style="left:782px;top:701px;width:1px;height:9px;background:#696969;"></div>
<div class="r" style="left:769px;top:702px;width:12px;height:1px;background:#e3e3e3;"></div>
<div class="r" style="left:769px;top:702px;width:1px;height:6px;background:#e3e3e3;"></div>
<div class="r" style="left:769px;top:708px;width:13px;height:1px;background:#a0a0a0;"></div>
<div class="r" style="left:781px;top:702px;width:1px;height:7px;background:#a0a0a0;"></div>
<div class="r" style="left:775px;top:696px;width:1px;height:1px;background:#000;"></div>
<div class="r" style="left:774px;top:697px;width:3px;height:1px;background:#000;"></div>
<div class="r" style="left:773px;top:698px;width:5px;height:1px;background:#000;"></div>
<div class="r" style="left:772px;top:699px;width:7px;height:1px;background:#000;"></div>
<div class="r" style="left:772px;top:704px;width:7px;height:1px;background:#000;"></div>
<div class="r" style="left:773px;top:705px;width:5px;height:1px;background:#000;"></div>
<div class="r" style="left:774px;top:706px;width:3px;height:1px;background:#000;"></div>
<div class="r" style="left:775px;top:707px;width:1px;height:1px;background:#000;"></div>
<div class="t" style="left:756px;top:694.84px;font-size:12px;color:#000;transform:scaleX(0.88);transform-origin:0 0">1</div>
<div class="r" style="left:811px;top:692px;width:55px;height:20px;background:#f0f0f0;"></div>
<div class="r" style="left:811px;top:692px;width:54px;height:1px;background:#fff;"></div>
<div class="r" style="left:811px;top:692px;width:1px;height:19px;background:#fff;"></div>
<div class="r" style="left:811px;top:711px;width:55px;height:1px;background:#696969;"></div>
<div class="r" style="left:865px;top:692px;width:1px;height:20px;background:#696969;"></div>
<div class="r" style="left:812px;top:693px;width:52px;height:1px;background:#e3e3e3;"></div>
<div class="r" style="left:812px;top:693px;width:1px;height:17px;background:#e3e3e3;"></div>
<div class="r" style="left:812px;top:710px;width:53px;height:1px;background:#a0a0a0;"></div>
<div class="r" style="left:864px;top:693px;width:1px;height:18px;background:#a0a0a0;"></div>
<div class="r" style="left:811px;top:692px;width:54px;height:1px;background:#fff;"></div>
<div class="r" style="left:811px;top:692px;width:55px;height:20px;box-sizing:border-box;border:1px solid #707070;border-radius:1px"></div>
<div class="t" style="left:825px;top:695.84px;font-size:12px;color:#000;transform:scaleX(0.88);transform-origin:0 0">Clear</div>
<div class="r" style="left:722px;top:716px;width:202px;height:67px;background:#404040;"></div>
<div class="r" style="left:723px;top:717px;width:76px;height:21px;background:#c6c3a6;"></div>
<div class="r" style="left:800px;top:717px;width:70px;height:21px;background:#fdfdd8;"></div>
<div class="r" style="left:871px;top:717px;width:52px;height:21px;background:#fdfdd8;"></div>
<div class="t" style="left:741px;top:722.84px;font-size:12px;color:#000;transform:scaleX(0.88);transform-origin:0 0">Ampl. 1</div>
<div class="t" style="left:803px;top:722.84px;font-size:12px;color:#000;transform:scaleX(0.88);transform-origin:0 0">34.73</div>
<div class="t" style="left:886px;top:722.84px;font-size:12px;color:#000;transform:scaleX(0.88);transform-origin:0 0">srch.</div>
<svg class="r" style="left:872px;top:720px;" width="13" height="15" viewBox="0 0 13 15"><path d="M3 5.5 C3 1.5 10.5 1.5 10.5 5 C10.5 7.5 7 7.5 6.5 10" stroke="#fff" stroke-width="4.4" fill="none"/><circle cx="6.5" cy="13" r="2.3" fill="#fff"/><path d="M3 5.5 C3 1.5 10.5 1.5 10.5 5 C10.5 7.5 7 7.5 6.5 10" stroke="#00d000" stroke-width="2.6" fill="none"/><circle cx="6.5" cy="13" r="1.5" fill="#00d000"/></svg>
<div class="r" style="left:723px;top:739px;width:76px;height:21px;background:#c6c3a6;"></div>
<div class="r" style="left:800px;top:739px;width:70px;height:21px;background:#fdfdd8;"></div>
<div class="r" style="left:871px;top:739px;width:52px;height:21px;background:#fdfdd8;"></div>
<div class="t" style="left:741px;top:744.84px;font-size:12px;color:#000;transform:scaleX(0.88);transform-origin:0 0">Lifet. 1</div>
<div class="t" style="left:803px;top:744.84px;font-size:12px;color:#000;transform:scaleX(0.88);transform-origin:0 0">9.929</div>
<div class="t" style="left:886px;top:744.84px;font-size:12px;color:#000;transform:scaleX(0.88);transform-origin:0 0">fit</div>
<svg class="r" style="left:872px;top:742px;" width="14" height="15" viewBox="0 0 14 15"><path d="M1.5 8 L4.5 13 L12 1.5" stroke="#806000" stroke-width="3.4" fill="none"/><path d="M1.5 8 L4.5 13 L12 1.5" stroke="#ffee00" stroke-width="2" fill="none"/></svg>
<div class="r" style="left:723px;top:761px;width:76px;height:21px;background:#a3a3c3;"></div>
<div class="r" style="left:800px;top:761px;width:70px;height:21px;background:#d2d2fa;"></div>
<div class="r" style="left:871px;top:761px;width:52px;height:21px;background:#d2d2fa;"></div>
<div class="t" style="left:741px;top:766.84px;font-size:12px;color:#000;transform:scaleX(0.88);transform-origin:0 0">Backgr.</div>
<div class="t" style="left:803px;top:766.84px;font-size:12px;color:#000;transform:scaleX(0.88);transform-origin:0 0">0.59</div>
<div class="t" style="left:886px;top:766.84px;font-size:12px;color:#000;transform:scaleX(0.88);transform-origin:0 0">srch.</div>
<svg class="r" style="left:872px;top:764px;" width="13" height="15" viewBox="0 0 13 15"><path d="M3 5.5 C3 1.5 10.5 1.5 10.5 5 C10.5 7.5 7 7.5 6.5 10" stroke="#fff" stroke-width="4.4" fill="none"/><circle cx="6.5" cy="13" r="2.3" fill="#fff"/><path d="M3 5.5 C3 1.5 10.5 1.5 10.5 5 C10.5 7.5 7 7.5 6.5 10" stroke="#00d000" stroke-width="2.6" fill="none"/><circle cx="6.5" cy="13" r="1.5" fill="#00d000"/></svg>
<div class="r" style="left:723px;top:738px;width:200px;height:1px;background:#101010;"></div>
<div class="r" style="left:723px;top:760px;width:200px;height:1px;background:#101010;"></div>
<div class="r" style="left:800px;top:738px;width:123px;height:1px;background:#c0c0c0;"></div>
<div class="r" style="left:800px;top:760px;width:123px;height:1px;background:#c0c0c0;"></div>
<div class="r" style="left:799px;top:717px;width:1px;height:65px;background:#101010;"></div>
<div class="r" style="left:870px;top:717px;width:1px;height:65px;background:#c0c0c0;"></div>
<svg class="r" style="left:724px;top:718px;" width="17" height="18" viewBox="0 0 17 18"><path d="M2 15 L4.5 14 L5.5 7 L7 5 L12.5 12.5 L14.5 13.5" stroke="#fff" stroke-width="4" fill="none"/><path d="M2 15 L4.5 14 L5.5 7 L7 5 L12.5 12.5 L14.5 13.5" stroke="#0000e0" stroke-width="2.6" fill="none"/><path d="M2 3.5 H14" stroke="#000"/><path d="M12.5 4 V17" stroke="#000"/><path d="M11 6 L12.5 4 L14 6" stroke="#000" fill="none"/></svg>
<svg class="r" style="left:724px;top:740px;" width="17" height="18" viewBox="0 0 17 18"><path d="M2 15 L4.5 14 L5.5 7 L7 5 L12.5 12.5 L14.5 13.5" stroke="#fff" stroke-width="4" fill="none"/><path d="M2 15 L4.5 14 L5.5 7 L7 5 L12.5 12.5 L14.5 13.5" stroke="#0000e0" stroke-width="2.6" fill="none"/><path d="M7.5 1 V7 M14.5 1 V7 M8 4.5 H14" stroke="#000"/></svg>
<svg class="r" style="left:724px;top:762px;" width="17" height="18" viewBox="0 0 17 18"><path d="M2 15 L4.5 14 L5.5 7 L7 5 L12.5 12.5 L14.5 13.5" stroke="#fff" stroke-width="4" fill="none"/><path d="M2 15 L4.5 14 L5.5 7 L7 5 L12.5 12.5 L14.5 13.5" stroke="#0000e0" stroke-width="2.6" fill="none"/><path d="M1 16.5 H15" stroke="#000"/></svg>
<div class="r" style="left:5px;top:1001px;width:709px;height:20px;background:#fff;"></div>
<div class="r" style="left:5px;top:1001px;width:708px;height:1px;background:#a0a0a0;"></div>
<div class="r" style="left:5px;top:1001px;width:1px;height:19px;background:#a0a0a0;"></div>
<div class="r" style="left:5px;top:1020px;width:709px;height:1px;background:#fff;"></div>
<div class="r" style="left:713px;top:1001px;width:1px;height:20px;background:#fff;"></div>
<div class="r" style="left:6px;top:1002px;width:706px;height:1px;background:#696969;"></div>
<div class="r" style="left:6px;top:1002px;width:1px;height:17px;background:#696969;"></div>
<div class="r" style="left:6px;top:1019px;width:707px;height:1px;background:#e3e3e3;"></div>
<div class="r" style="left:712px;top:1002px;width:1px;height:18px;background:#e3e3e3;"></div>
<div class="t" style="left:8px;top:1004.84px;font-size:12px;color:#000;transform:scaleX(0.903);transform-origin:0 0">total counts: 15357 ; counts between markers: 12840 (84%) ; 0.032ns/chnl</div>
<div class="r" style="left:716px;top:1000px;width:56px;height:21px;background:#fff;"></div>
<div class="r" style="left:716px;top:1000px;width:56px;height:21px;box-sizing:border-box;border:1px solid #696969;outline:1px solid #a0a0a0"></div>
<div class="r" style="left:774px;top:1000px;width:83px;height:21px;background:#fff;"></div>
<div class="r" style="left:774px;top:1000px;width:83px;height:21px;box-sizing:border-box;border:1px solid #696969;outline:1px solid #a0a0a0"></div>
<div class="r" style="left:859px;top:1000px;width:72px;height:21px;background:#fff;"></div>
<div class="r" style="left:859px;top:1000px;width:72px;height:21px;box-sizing:border-box;border:1px solid #696969;outline:1px solid #a0a0a0"></div>
<div class="t" style="left:717px;top:1003.00px;font-size:13px;color:#000;transform:scaleX(0.9);transform-origin:0 0">X</div>
<div class="t" style="left:725px;top:1002.23px;font-size:8px;color:#000;transform:scaleX(0.9);transform-origin:0 0">2</div>
<div class="t" style="left:729px;top:1003.84px;font-size:12px;color:#000;transform:scaleX(0.9);transform-origin:0 0">: 0.677</div>
<div class="t" style="left:777px;top:1002.46px;font-size:16px;color:#000;transform:scaleX(0.95);transform-origin:0 0">τ</div>
<div class="t" style="left:785px;top:1008.69px;font-size:11px;color:#000;transform:scaleX(0.9);transform-origin:0 0">amp</div>
<div class="t" style="left:802px;top:1003.84px;font-size:12px;color:#000;transform:scaleX(0.9);transform-origin:0 0">: 9.93 ns</div>
<div class="t" style="left:862px;top:1002.46px;font-size:16px;color:#000;transform:scaleX(0.95);transform-origin:0 0">τ</div>
<div class="t" style="left:869px;top:1008.69px;font-size:11px;color:#000;transform:scaleX(0.9);transform-origin:0 0">int</div>
<div class="t" style="left:879px;top:1003.84px;font-size:12px;color:#000;transform:scaleX(0.9);transform-origin:0 0">: 9.93 ns</div>
<div class="r" style="left:1px;top:1021px;width:931px;height:1px;background:#fff;"></div>
<div class="r" style="left:1px;top:1023px;width:932px;height:1px;background:#a0a0a0;"></div>
<div class="r" style="left:1px;top:1024px;width:932px;height:1px;background:#fff;"></div>
<div class="t" style="left:17px;top:1028.84px;font-size:12px;color:#000;transform:scaleX(0.88);transform-origin:0 0">Size (X × Y):</div>
<div class="r" style="left:78px;top:1027px;width:67px;height:15px;background:#f0f0f0;"></div>
<div class="r" style="left:78px;top:1027px;width:67px;height:1px;background:#a0a0a0;"></div>
<div class="r" style="left:78px;top:1027px;width:1px;height:15px;background:#a0a0a0;"></div>
<div class="r" style="left:78px;top:1042px;width:68px;height:1px;background:#fff;"></div>
<div class="r" style="left:145px;top:1027px;width:1px;height:16px;background:#fff;"></div>
<div class="t" style="left:78px;width:67px;text-align:center;top:1029.69px;font-size:11px;letter-spacing:-0.3px">12.98 µm</div>
<div class="r" style="left:147px;top:1027px;width:69px;height:15px;background:#f0f0f0;"></div>
<div class="r" style="left:147px;top:1027px;width:69px;height:1px;background:#a0a0a0;"></div>
<div class="r" style="left:147px;top:1027px;width:1px;height:15px;background:#a0a0a0;"></div>
<div class="r" style="left:147px;top:1042px;width:70px;height:1px;background:#fff;"></div>
<div class="r" style="left:216px;top:1027px;width:1px;height:16px;background:#fff;"></div>
<div class="t" style="left:147px;width:69px;text-align:center;top:1029.69px;font-size:11px;letter-spacing:-0.3px">12.98 µm</div>
<div class="t" style="left:237px;top:1028.84px;font-size:12px;color:#000;transform:scaleX(0.88);transform-origin:0 0">Pixels (X × Y):</div>
<div class="r" style="left:306px;top:1027px;width:37px;height:15px;background:#f0f0f0;"></div>
<div class="r" style="left:306px;top:1027px;width:37px;height:1px;background:#a0a0a0;"></div>
<div class="r" style="left:306px;top:1027px;width:1px;height:15px;background:#a0a0a0;"></div>
<div class="r" style="left:306px;top:1042px;width:38px;height:1px;background:#fff;"></div>
<div class="r" style="left:343px;top:1027px;width:1px;height:16px;background:#fff;"></div>
<div class="t" style="left:306px;width:37px;text-align:center;top:1029.69px;font-size:11px;letter-spacing:-0.3px">512</div>
<div class="r" style="left:346px;top:1027px;width:37px;height:15px;background:#f0f0f0;"></div>
<div class="r" style="left:346px;top:1027px;width:37px;height:1px;background:#a0a0a0;"></div>
<div class="r" style="left:346px;top:1027px;width:1px;height:15px;background:#a0a0a0;"></div>
<div class="r" style="left:346px;top:1042px;width:38px;height:1px;background:#fff;"></div>
<div class="r" style="left:383px;top:1027px;width:1px;height:16px;background:#fff;"></div>
<div class="t" style="left:346px;width:37px;text-align:center;top:1029.69px;font-size:11px;letter-spacing:-0.3px">512</div>
<div class="t" style="left:397px;top:1028.84px;font-size:12px;color:#000;transform:scaleX(0.88);transform-origin:0 0">Zoom:</div>
<div class="r" style="left:430px;top:1027px;width:48px;height:15px;background:#f0f0f0;"></div>
<div class="r" style="left:430px;top:1027px;width:48px;height:1px;background:#a0a0a0;"></div>
<div class="r" style="left:430px;top:1027px;width:1px;height:15px;background:#a0a0a0;"></div>
<div class="r" style="left:430px;top:1042px;width:49px;height:1px;background:#fff;"></div>
<div class="r" style="left:478px;top:1027px;width:1px;height:16px;background:#fff;"></div>
<div class="t" style="left:430px;width:48px;text-align:center;top:1029.69px;font-size:11px;letter-spacing:-0.3px">1 : 1</div>
<div class="t" style="left:504px;top:1028.84px;font-size:12px;color:#000;transform:scaleX(0.88);transform-origin:0 0">Time per Pixel:</div>
<div class="r" style="left:576px;top:1027px;width:67px;height:15px;background:#f0f0f0;"></div>
<div class="r" style="left:576px;top:1027px;width:67px;height:1px;background:#a0a0a0;"></div>
<div class="r" style="left:576px;top:1027px;width:1px;height:15px;background:#a0a0a0;"></div>
<div class="r" style="left:576px;top:1042px;width:68px;height:1px;background:#fff;"></div>
<div class="r" style="left:643px;top:1027px;width:1px;height:16px;background:#fff;"></div>
<div class="t" style="left:576px;width:67px;text-align:center;top:1029.69px;font-size:11px;letter-spacing:-0.3px">4.011ms</div>
<div class="r" style="left:646px;top:1027px;width:275px;height:15px;background:#f0f0f0;"></div>
<div class="r" style="left:646px;top:1027px;width:275px;height:1px;background:#a0a0a0;"></div>
<div class="r" style="left:646px;top:1027px;width:1px;height:15px;background:#a0a0a0;"></div>
<div class="r" style="left:646px;top:1042px;width:276px;height:1px;background:#fff;"></div>
<div class="r" style="left:921px;top:1027px;width:1px;height:16px;background:#fff;"></div>
<div class="t" style="left:649px;top:1028.84px;font-size:12px;color:#000;transform:scaleX(0.88);transform-origin:0 0">fast FLIM</div>
<svg class="r" style="left:918px;top:1030px;" width="13" height="13" viewBox="0 0 13 13"><path d="M12 1 L1 12 M12 5 L5 12 M12 9 L9 12" stroke="#a0a0a0" stroke-width="1.5"/><path d="M12.8 1.8 L1.8 12.8 M12.8 5.8 L5.8 12.8 M12.8 9.8 L9.8 12.8" stroke="#fff" stroke-width="0.8"/></svg>
</body></html>
